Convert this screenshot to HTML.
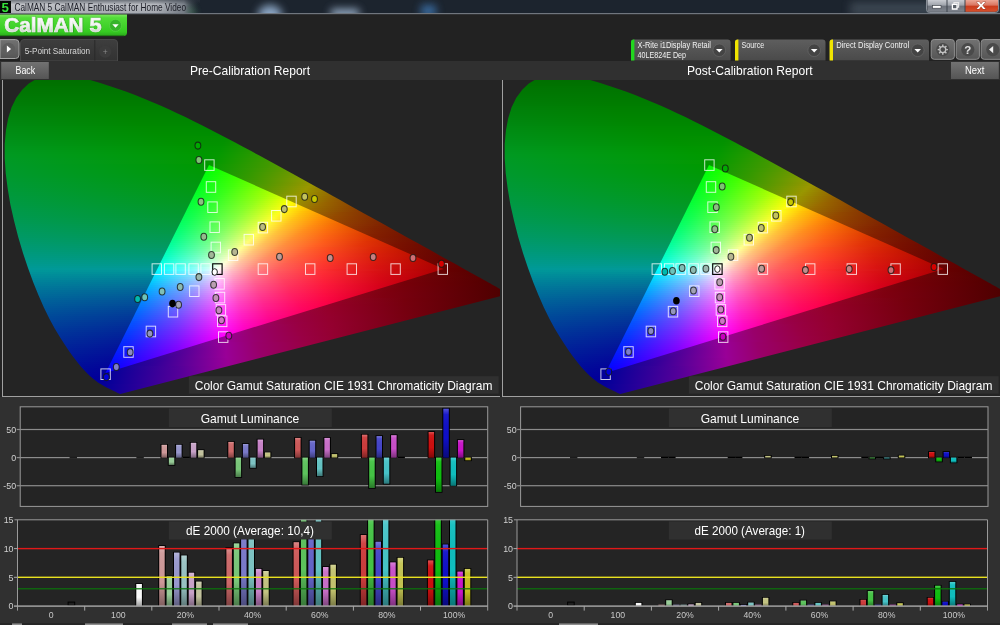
<!DOCTYPE html>
<html><head><meta charset="utf-8"><title>CalMAN 5</title>
<style>
html,body{margin:0;padding:0;background:#222}
body{width:1000px;height:625px;position:relative;overflow:hidden;font-family:"Liberation Sans",sans-serif}
.cie{position:absolute;top:80px;width:500px;height:317px;background:#242424;overflow:hidden}
.cie i{display:block;height:2px}
.hs{position:absolute;left:0;top:0;width:500px;height:317px;clip-path:polygon(120.3px 314.0px,120.1px 314.0px,119.8px 313.9px,119.5px 313.8px,119.2px 313.6px,118.9px 313.5px,118.5px 313.3px,118.1px 313.2px,117.7px 312.9px,117.2px 312.7px,116.6px 312.4px,116.1px 312.1px,115.4px 311.8px,114.7px 311.5px,114.0px 311.1px,113.2px 310.7px,112.2px 310.2px,111.2px 309.7px,110.1px 309.2px,108.9px 308.6px,107.6px 308.0px,106.2px 307.3px,104.7px 306.5px,103.1px 305.6px,101.4px 304.6px,99.6px 303.5px,97.6px 302.2px,95.5px 300.6px,93.1px 298.7px,90.5px 296.5px,87.6px 293.7px,84.5px 290.6px,81.2px 286.9px,77.6px 282.6px,73.7px 277.5px,69.5px 271.7px,65.0px 264.9px,60.0px 257.2px,54.7px 248.5px,49.4px 238.7px,44.0px 227.7px,38.6px 215.6px,33.3px 202.4px,28.0px 188.1px,22.9px 172.8px,18.2px 157.1px,14.1px 141.1px,10.4px 124.7px,7.7px 108.7px,5.7px 93.2px,4.7px 78.1px,4.7px 63.9px,5.9px 50.6px,8.2px 38.2px,11.6px 27.2px,16.3px 17.7px,22.2px 9.7px,28.8px 3.4px,36.3px -1.0px,44.6px -3.6px,53.3px -5.0px,62.2px -5.1px,71.5px -3.8px,80.8px -2.1px,90.1px 0.1px,99.5px 2.8px,108.7px 5.7px,117.7px 8.7px,126.5px 11.8px,135.1px 15.1px,143.6px 18.5px,152.0px 22.0px,160.4px 25.6px,168.8px 29.3px,177.1px 33.2px,185.4px 37.1px,193.7px 41.2px,201.9px 45.3px,210.1px 49.5px,218.3px 53.7px,226.5px 58.0px,234.7px 62.3px,243.0px 66.7px,251.2px 71.1px,259.4px 75.6px,267.6px 80.0px,275.8px 84.5px,284.0px 89.0px,292.2px 93.5px,300.3px 98.0px,308.4px 102.4px,316.5px 106.9px,324.5px 111.3px,332.4px 115.7px,340.2px 120.1px,348.0px 124.4px,355.6px 128.7px,363.2px 132.9px,370.6px 137.0px,377.9px 141.1px,385.1px 145.0px,392.1px 148.9px,398.9px 152.7px,405.5px 156.4px,411.9px 159.9px,418.0px 163.3px,423.8px 166.6px,429.3px 169.6px,434.6px 172.6px,439.7px 175.4px,444.6px 178.2px,449.3px 180.7px,453.6px 183.1px,457.6px 185.3px,461.4px 187.4px,464.9px 189.4px,468.2px 191.2px,471.3px 192.9px,474.1px 194.5px,476.7px 196.0px,479.1px 197.3px,481.4px 198.6px,483.5px 199.7px,485.4px 200.8px,487.2px 201.8px,488.9px 202.7px,490.5px 203.6px,491.9px 204.4px,493.3px 205.2px,494.7px 205.9px,495.9px 206.6px,497.0px 207.3px,498.1px 207.9px,499.1px 208.4px,500.0px 208.9px,500.9px 209.4px,501.6px 209.8px,502.3px 210.2px,502.9px 210.5px,503.5px 210.8px,504.0px 211.1px,504.5px 211.4px,505.0px 211.6px,505.4px 211.9px,505.7px 212.1px,506.0px 212.2px,506.2px 212.3px,506.5px 212.5px,506.7px 212.6px,506.9px 212.7px,507.1px 212.8px,507.3px 212.9px,507.4px 213.0px,507.6px 213.1px,507.7px 213.2px,507.9px 213.3px,508.0px 213.4px,508.2px 213.4px,508.3px 213.5px,508.5px 213.6px,508.6px 213.6px,508.7px 213.7px,508.7px 213.7px,508.8px 213.8px,508.8px 213.8px,508.9px 213.8px,508.9px 213.8px,508.9px 213.9px,508.9px 213.9px)}
.tr{position:absolute;left:0;top:85px;width:500px;clip-path:polygon(443.6px 103.9px,209.0px 0.0px,105.5px 207.9px)}
#ov{position:absolute;left:0;top:0}
.o0{margin-left:30px;width:68px;background:linear-gradient(90deg,#007000 0px,#007000 68px)}
.o1{margin-left:27px;width:78px;background:linear-gradient(90deg,#007100 0px,#007100 78px)}
.o2{margin-left:25px;width:86px;background:linear-gradient(90deg,#007200 0px,#007200 86px)}
.o3{margin-left:22px;width:95px;background:linear-gradient(90deg,#007401 0px,#007400 95px)}
.o4{margin-left:20px;width:103px;background:linear-gradient(90deg,#007502 0px,#007500 103px)}
.o5{margin-left:19px;width:109px;background:linear-gradient(90deg,#007603 0px,#007600 109px)}
.o6{margin-left:18px;width:116px;background:linear-gradient(90deg,#007703 0px,#070 116px)}
.o7{margin-left:16px;width:123px;background:linear-gradient(90deg,#007804 0px,#007800 123px)}
.o8{margin-left:15px;width:129px;background:linear-gradient(90deg,#007905 0px,#007900 105px,#007900 129px)}
.o9{margin-left:14px;width:135px;background:linear-gradient(90deg,#007a06 0px,#007a00 97px,#007a00 135px)}
.o10{margin-left:13px;width:141px;background:linear-gradient(90deg,#007b06 0px,#007b00 97px,#007b00 141px)}
.o11{margin-left:12px;width:146px;background:linear-gradient(90deg,#007c07 0px,#007c00 97px,#007c00 146px)}
.o12{margin-left:11px;width:152px;background:linear-gradient(90deg,#007d08 0px,#007d00 100px,#007d00 152px)}
.o13{margin-left:10px;width:157px;background:linear-gradient(90deg,#007f09 0px,#007f00 102px,#007f00 157px)}
.o14{margin-left:9px;width:163px;background:linear-gradient(90deg,#00800a 0px,#008000 106px,#008000 163px)}
.o15{margin-left:9px;width:167px;background:linear-gradient(90deg,#00810b 0px,#008100 109px,#008100 167px)}
.o16{margin-left:8px;width:172px;background:linear-gradient(90deg,#00820b 0px,#008200 113px,#008200 172px)}
.o17{margin-left:7px;width:177px;background:linear-gradient(90deg,#00830c 0px,#008300 117px,#008300 177px)}
.o18{margin-left:7px;width:182px;background:linear-gradient(90deg,#00840d 0px,#008400 121px,#008400 182px)}
.o19{margin-left:6px;width:187px;background:linear-gradient(90deg,#00850e 0px,#008500 125px,#008500 187px)}
.o20{margin-left:6px;width:191px;background:linear-gradient(90deg,#00860f 0px,#008600 129px,#008600 191px)}
.o21{margin-left:6px;width:195px;background:linear-gradient(90deg,#008710 0px,#008700 133px,#008700 195px)}
.o22{margin-left:5px;width:200px;background:linear-gradient(90deg,#081 0px,#080 138px,#080 200px)}
.o23{margin-left:5px;width:204px;background:linear-gradient(90deg,#008a12 0px,#008a00 142px,#008a00 204px)}
.o24{margin-left:4px;width:209px;background:linear-gradient(90deg,#008b13 0px,#008b00 147px,#008b00 209px)}
.o25{margin-left:4px;width:213px;background:linear-gradient(90deg,#008c14 0px,#008c00 151px,#008c00 213px)}
.o26{margin-left:4px;width:216px;background:linear-gradient(90deg,#008d15 0px,#008d00 155px,#008d00 216px)}
.o27{margin-left:4px;width:220px;background:linear-gradient(90deg,#008e16 0px,#008e00 159px,#008e00 220px)}
.o28{margin-left:4px;width:224px;background:linear-gradient(90deg,#008f17 0px,#008f00 163px,#038f00 222px,#048f00 224px)}
.o29{margin-left:4px;width:228px;background:linear-gradient(90deg,#009018 0px,#009000 167px,#039000 221px,#089000 228px)}
.o30{margin-left:3px;width:233px;background:linear-gradient(90deg,#00911a 0px,#009100 172px,#039100 221px,#0d9100 233px)}
.o31{margin-left:3px;width:236px;background:linear-gradient(90deg,#00921b 0px,#009200 176px,#039200 220px,#119200 236px)}
.o32{margin-left:3px;width:240px;background:linear-gradient(90deg,#00931c 0px,#009300 180px,#039300 219px,#169300 240px)}
.o33{margin-left:3px;width:244px;background:linear-gradient(90deg,#00951d 0px,#009500 184px,#039500 218px,#1b9500 244px)}
.o34{margin-left:3px;width:248px;background:linear-gradient(90deg,#00961e 0px,#009600 188px,#039600 217px,#209600 248px)}
.o35{margin-left:3px;width:251px;background:linear-gradient(90deg,#009720 0px,#009700 192px,#039700 216px,#259700 251px)}
.o36{margin-left:3px;width:255px;background:linear-gradient(90deg,#009821 0px,#009800 196px,#049800 216px,#2b9800 255px)}
.o37{margin-left:3px;width:259px;background:linear-gradient(90deg,#092 0px,#090 201px,#049900 215px,#319900 259px)}
.o38{margin-left:3px;width:262px;background:linear-gradient(90deg,#009923 0px,#090 205px,#089900 218px,#369900 262px)}
.o39{margin-left:3px;width:266px;background:linear-gradient(90deg,#009925 0px,#090 209px,#3d9900 266px)}
.o40{margin-left:3px;width:270px;background:linear-gradient(90deg,#009926 0px,#039900 211px,#439900 270px)}
.o41{margin-left:3px;width:273px;background:linear-gradient(90deg,#009927 0px,#039900 210px,#499900 273px)}
.o42{margin-left:4px;width:276px;background:linear-gradient(90deg,#009928 0px,#009901 203px,#419900 264px,#509900 276px)}
.o43{margin-left:4px;width:280px;background:linear-gradient(90deg,#009929 0px,#009902 202px,#409900 262px,#589900 280px)}
.o44{margin-left:4px;width:283px;background:linear-gradient(90deg,#00992a 0px,#009903 202px,#4b9900 269px,#5e9900 283px)}
.o45{margin-left:4px;width:287px;background:linear-gradient(90deg,#00992c 0px,#009905 201px,#349900 249px,#690 287px)}
.o46{margin-left:4px;width:291px;background:linear-gradient(90deg,#00992d 0px,#009906 200px,#2f9900 243px,#6f9900 291px)}
.o47{margin-left:4px;width:294px;background:linear-gradient(90deg,#00992e 0px,#009908 199px,#390 245px,#769900 294px)}
.o48{margin-left:5px;width:297px;background:linear-gradient(90deg,#00992f 0px,#009909 198px,#379900 246px,#7f9900 297px)}
.o49{margin-left:5px;width:301px;background:linear-gradient(90deg,#009931 0px,#00990b 197px,#3e9900 250px,#899900 301px)}
.o50{margin-left:5px;width:304px;background:linear-gradient(90deg,#009932 0px,#01990c 197px,#490 253px,#919900 304px)}
.o51{margin-left:5px;width:308px;background:linear-gradient(90deg,#009934 0px,#01990e 196px,#4d9900 258px,#999600 308px)}
.o52{margin-left:6px;width:310px;background:linear-gradient(90deg,#009935 0px,#029910 195px,#549900 260px,#999600 305px,#998e00 310px)}
.o53{margin-left:6px;width:314px;background:linear-gradient(90deg,#009936 0px,#029911 194px,#579900 260px,#999700 302px,#998400 314px)}
.o54{margin-left:6px;width:318px;background:linear-gradient(90deg,#009938 0px,#029913 193px,#589900 259px,#999700 300px,#977a00 318px)}
.o55{margin-left:6px;width:321px;background:linear-gradient(90deg,#009939 0px,#029915 192px,#579902 257px,#999700 298px,#967300 321px)}
.o56{margin-left:7px;width:324px;background:linear-gradient(90deg,#00993b 0px,#029917 190px,#579904 254px,#999600 295px,#946a00 324px)}
.o57{margin-left:7px;width:327px;background:linear-gradient(90deg,#00993c 0px,#029919 189px,#569906 252px,#8f9900 286px,#999600 293px,#946800 324px,#936400 327px)}
.o58{margin-left:7px;width:331px;background:linear-gradient(90deg,#00993e 0px,#02991b 188px,#589908 251px,#959900 287px,#998a00 298px,#936100 327px,#925c00 331px)}
.o59{margin-left:8px;width:334px;background:linear-gradient(90deg,#00993f 0px,#02991d 186px,#57990b 248px,#999700 287px,#956400 322px,#905500 334px)}
.o60{margin-left:8px;width:337px;background:linear-gradient(90deg,#009941 0px,#02991f 185px,#57990d 246px,#999700 285px,#956100 322px,#8f5000 337px)}
.o61{margin-left:8px;width:341px;background:linear-gradient(90deg,#009943 0px,#029921 184px,#589910 245px,#999602 283px,#976300 318px,#8d4a00 341px)}
.o62{margin-left:9px;width:343px;background:linear-gradient(90deg,#094 0px,#029924 182px,#579912 242px,#999604 280px,#996a00 310px,#8c4600 343px)}
.o63{margin-left:9px;width:347px;background:linear-gradient(90deg,#009946 0px,#029926 181px,#579915 240px,#999807 277px,#996c00 306px,#8a4000 347px)}
.o64{margin-left:10px;width:350px;background:linear-gradient(90deg,#009948 0px,#029928 179px,#579918 237px,#99970a 274px,#996b00 303px,#8a3e00 347px,#893c00 350px)}
.o65{margin-left:10px;width:353px;background:linear-gradient(90deg,#00994a 0px,#02992b 178px,#58991a 236px,#99970d 272px,#996a01 301px,#8a3c00 347px,#873800 353px)}
.o66{margin-left:11px;width:356px;background:linear-gradient(90deg,#00994c 0px,#02992d 176px,#57991d 233px,#999710 269px,#996a03 298px,#904700 330px,#863300 356px)}
.o67{margin-left:11px;width:359px;background:linear-gradient(90deg,#00994d 0px,#029930 175px,#579920 231px,#999613 267px,#996a05 295px,#934b00 324px,#843000 359px)}
.o68{margin-left:11px;width:363px;background:linear-gradient(90deg,#00994f 0px,#029932 174px,#569923 229px,#999616 265px,#996a08 293px,#944a00 322px,#832c00 363px)}
.o69{margin-left:12px;width:366px;background:linear-gradient(90deg,#009951 0px,#039935 172px,#589926 227px,#99981a 261px,#996b0b 288px,#944a00 319px,#812900 366px)}
.o70{margin-left:12px;width:369px;background:linear-gradient(90deg,#009953 0px,#039937 171px,#579929 225px,#99971d 259px,#996b0d 286px,#954901 318px,#802600 369px)}
.o71{margin-left:13px;width:372px;background:linear-gradient(90deg,#095 0px,#03993a 169px,#57992c 222px,#999721 256px,#996a10 283px,#954703 317px,#802500 368px,#7e2300 372px)}
.o72{margin-left:13px;width:375px;background:linear-gradient(90deg,#009958 0px,#03993d 168px,#58992f 221px,#999624 254px,#996b13 280px,#954404 317px,#802300 369px,#7d2000 375px)}
.o73{margin-left:14px;width:378px;background:linear-gradient(90deg,#00995a 0px,#039940 166px,#589933 218px,#999628 251px,#996a15 277px,#954305 315px,#822500 361px,#7b1d00 378px)}
.o74{margin-left:14px;width:382px;background:linear-gradient(90deg,#00995c 0px,#039943 165px,#579936 216px,#99982c 248px,#996c19 273px,#954106 315px,#822300 361px,#7a1b00 382px)}
.o75{margin-left:15px;width:384px;background:linear-gradient(90deg,#00995e 0px,#039946 163px,#57993a 213px,#999730 245px,#996b1b 270px,#953f08 314px,#822100 362px,#791900 384px)}
.o76{margin-left:15px;width:388px;background:linear-gradient(90deg,#009961 0px,#039949 162px,#58993e 212px,#999734 243px,#996a1e 268px,#97410a 309px,#822000 362px,#771600 388px)}
.o77{margin-left:16px;width:390px;background:linear-gradient(90deg,#009963 0px,#03994d 160px,#579941 209px,#999738 240px,#996a21 265px,#99430e 303px,#842100 355px,#761400 390px)}
.o78{margin-left:16px;width:394px;background:linear-gradient(90deg,#009965 0px,#039950 159px,#579945 207px,#99963c 238px,#996a25 262px,#994410 299px,#842000 354px,#741200 394px)}
.o79{margin-left:17px;width:397px;background:linear-gradient(90deg,#009968 0px,#039953 157px,#589949 205px,#999841 234px,#996b28 258px,#994513 294px,#892504 341px,#721000 397px)}
.o80{margin-left:18px;width:399px;background:linear-gradient(90deg,#00996a 0px,#039957 155px,#58994d 202px,#999845 231px,#996c2c 254px,#994416 290px,#922e0a 320px,#791400 380px,#710f00 399px)}
.o81{margin-left:18px;width:403px;background:linear-gradient(90deg,#00996d 0px,#03995b 154px,#579952 200px,#99974a 229px,#996b2f 252px,#994418 287px,#932f0c 316px,#791200 381px,#700d00 403px)}
.o82{margin-left:19px;width:405px;background:linear-gradient(90deg,#009970 0px,#03995f 152px,#579956 197px,#99974e 226px,#996a32 249px,#99441b 284px,#942f0e 313px,#7a1200 377px,#6e0b00 405px)}
.o83{margin-left:19px;width:409px;background:linear-gradient(90deg,#009973 0px,#039962 151px,#58995a 196px,#999653 224px,#996b37 246px,#99441e 280px,#942d0f 312px,#7a1100 377px,#6d0a00 409px)}
.o84{margin-left:20px;width:411px;background:linear-gradient(90deg,#009975 0px,#039967 149px,#58995f 193px,#999657 221px,#996a3a 243px,#994320 277px,#952c11 310px,#7a1000 376px,#6b0900 411px)}
.o85{margin-left:21px;width:414px;background:linear-gradient(90deg,#009978 0px,#01996b 146px,#559964 189px,#99985e 217px,#996c40 238px,#994524 271px,#952b12 308px,#7a0f01 374px,#6a0700 414px)}
.o86{margin-left:21px;width:418px;background:linear-gradient(90deg,#00997c 0px,#01996f 145px,#579969 188px,#999863 215px,#996b43 236px,#994527 268px,#952913 308px,#790e01 376px,#680600 418px)}
.o87{margin-left:22px;width:420px;background:linear-gradient(90deg,#00997f 0px,#019974 143px,#56996e 185px,#999769 212px,#996b47 233px,#99442a 265px,#952714 307px,#790d02 376px,#670500 420px)}
.o88{margin-left:22px;width:424px;background:linear-gradient(90deg,#009982 0px,#019978 142px,#559974 183px,#99976e 210px,#996a4b 231px,#99432c 263px,#952515 307px,#790c02 377px,#650400 424px)}
.o89{margin-left:23px;width:426px;background:linear-gradient(90deg,#009985 0px,#01997d 140px,#579979 181px,#999674 207px,#996a50 227px,#994430 258px,#962417 305px,#790b03 376px,#640300 426px)}
.o90{margin-left:24px;width:429px;background:linear-gradient(90deg,#009989 0px,#019982 138px,#56997f 178px,#99987c 203px,#996b55 223px,#994535 253px,#962217 304px,#780903 376px,#620200 429px)}
.o91{margin-left:24px;width:433px;background:linear-gradient(90deg,#00998c 0px,#019987 137px,#569985 176px,#999882 201px,#996c5b 220px,#994639 249px,#98231b 299px,#7b0a05 369px,#610100 433px)}
.o92{margin-left:25px;width:435px;background:linear-gradient(90deg,#009990 0px,#01998c 135px,#55998b 173px,#999788 198px,#996b5f 217px,#99453c 246px,#99241e 294px,#7d0a07 364px,#600000 435px)}
.o93{margin-left:26px;width:438px;background:linear-gradient(90deg,#009994 0px,#029992 133px,#579991 171px,#99978e 195px,#996a64 214px,#99443f 243px,#992320 291px,#7d0907 362px,#5e0000 438px)}
.o94{margin-left:27px;width:441px;background:linear-gradient(90deg,#009998 0px,#029998 131px,#569998 168px,#999695 192px,#996b6a 210px,#944 238px,#992423 284px,#891010 331px,#630000 425px,#5c0000 441px)}
.o95{margin-left:27px;width:444px;background:linear-gradient(90deg,#009699 0px,#029499 130px,#559499 167px,#999399 191px,#99686d 209px,#994246 237px,#992225 283px,#8e1214 320px,#680001 413px,#5b0000 444px)}
.o96{margin-left:28px;width:447px;background:linear-gradient(90deg,#009299 0px,#018f99 128px,#568d99 166px,#998996 191px,#99606a 210px,#993c44 239px,#991e23 287px,#7d0609 360px,#5b0000 443px,#590000 447px)}
.o97{margin-left:29px;width:449px;background:linear-gradient(90deg,#008e99 0px,#018999 126px,#568799 165px,#998397 190px,#995c6b 209px,#993944 239px,#991b23 288px,#7c0509 361px,#580000 449px)}
.o98{margin-left:29px;width:453px;background:linear-gradient(90deg,#008b99 0px,#018499 125px,#578199 165px,#997d97 190px,#99566a 210px,#993544 240px,#991923 290px,#7c040a 362px,#570000 453px)}
.o99{margin-left:30px;width:456px;background:linear-gradient(90deg,#008799 0px,#017f99 123px,#557b99 163px,#997798 189px,#99526b 209px,#993244 240px,#981623 292px,#7a020a 365px,#500 456px)}
.o100{margin-left:31px;width:458px;background:linear-gradient(90deg,#008399 0px,#017a99 121px,#567699 162px,#997198 188px,#994e6c 208px,#992f45 239px,#981424 291px,#7a010a 364px,#540000 458px)}
.o101{margin-left:32px;width:461px;background:linear-gradient(90deg,#007f99 0px,#017699 119px,#567099 161px,#996a96 188px,#99486a 209px,#992a44 241px,#961021 296px,#760009 373px,#520000 461px)}
.o102{margin-left:32px;width:464px;background:linear-gradient(90deg,#007c99 0px,#037199 119px,#576b99 161px,#996497 188px,#99446b 209px,#992744 242px,#960e22 296px,#770009 372px,#510000 464px)}
.o103{margin-left:33px;width:467px;background:linear-gradient(90deg,#007899 0px,#036d99 117px,#586699 160px,#995f97 187px,#99406c 208px,#992445 241px,#960d23 295px,#78000b 367px,#4f0000 467px)}
.o104{margin-left:34px;width:466px;background:linear-gradient(90deg,#007599 0px,#036899 115px,#586199 159px,#995a97 186px,#993c6b 208px,#992144 242px,#960b24 294px,#7a000c 362px,#4f0000 466px)}
.o105{margin-left:35px;width:465px;background:linear-gradient(90deg,#007199 0px,#036499 113px,#575c99 157px,#995598 185px,#99386c 207px,#991f45 241px,#960a24 293px,#7c000e 356px,#4f0000 465px)}
.o106{margin-left:36px;width:464px;background:linear-gradient(90deg,#006e99 0px,#036099 111px,#575899 156px,#994f96 185px,#993369 208px,#991b43 243px,#960825 292px,#7e0010 350px,#4f0000 464px)}
.o107{margin-left:36px;width:464px;background:linear-gradient(90deg,#006b99 0px,#035c99 110px,#585399 156px,#994a96 185px,#99306a 208px,#991944 243px,#960726 292px,#7f0011 347px,#4f0000 464px)}
.o108{margin-left:37px;width:463px;background:linear-gradient(90deg,#006899 0px,#035899 108px,#584f99 155px,#994697 184px,#992d6b 207px,#991644 243px,#960527 291px,#7f0011 347px,#4f0000 463px)}
.o109{margin-left:38px;width:456px;background:linear-gradient(90deg,#006499 0px,#035599 106px,#574b99 153px,#994297 183px,#99296a 207px,#991343 244px,#950427 291px,#76000d 367px,#520001 456px)}
.o110{margin-left:39px;width:448px;background:linear-gradient(90deg,#006199 0px,#035199 104px,#574799 152px,#993d98 182px,#99266b 206px,#914 243px,#950228 290px,#76000d 366px,#540002 448px)}
.o111{margin-left:40px;width:439px;background:linear-gradient(90deg,#005e99 0px,#034e99 102px,#584399 151px,#993998 181px,#99236c 205px,#990f45 242px,#950129 289px,#76000e 365px,#580003 439px)}
.o112{margin-left:41px;width:430px;background:linear-gradient(90deg,#005b99 0px,#034b99 100px,#583f99 150px,#993496 181px,#991e6a 206px,#990c43 244px,#950029 288px,#76000e 364px,#5b0004 430px)}
.o113{margin-left:42px;width:421px;background:linear-gradient(90deg,#005899 0px,#024799 98px,#573b99 148px,#993097 180px,#991c6a 205px,#990944 244px,#95002a 287px,#76000f 363px,#5e0005 421px)}
.o114{margin-left:43px;width:413px;background:linear-gradient(90deg,#059 0px,#024499 96px,#573799 147px,#992d97 179px,#99196b 204px,#990844 243px,#95002b 286px,#76000f 362px,#610006 413px)}
.o115{margin-left:44px;width:404px;background:linear-gradient(90deg,#005299 0px,#024199 94px,#583499 146px,#992997 178px,#99166b 204px,#990544 244px,#95002b 285px,#760010 361px,#640008 404px)}
.o116{margin-left:45px;width:395px;background:linear-gradient(90deg,#004f99 0px,#023e99 92px,#573199 144px,#992598 177px,#99136b 203px,#990344 243px,#95002c 284px,#770010 359px,#680009 395px)}
.o117{margin-left:46px;width:386px;background:linear-gradient(90deg,#004c99 0px,#023b99 90px,#572d99 143px,#992196 177px,#991069 204px,#990143 245px,#95002d 283px,#701 358px,#6b000b 386px)}
.o118{margin-left:47px;width:378px;background:linear-gradient(90deg,#004999 0px,#023899 88px,#582a99 142px,#991e96 176px,#990d6a 203px,#990043 245px,#95002e 282px,#701 357px,#6e000d 378px)}
.o119{margin-left:48px;width:369px;background:linear-gradient(90deg,#004799 0px,#023699 86px,#582799 141px,#991a97 175px,#990b6b 202px,#904 244px,#95002e 281px,#770012 356px,#71000f 369px)}
.o120{margin-left:49px;width:360px;background:linear-gradient(90deg,#049 0px,#023399 84px,#572499 139px,#991797 174px,#99086a 202px,#990047 239px,#95002f 280px,#770012 355px,#740011 360px)}
.o121{margin-left:50px;width:351px;background:linear-gradient(90deg,#004199 0px,#023099 82px,#572199 138px,#991498 173px,#99066b 201px,#99004a 236px,#950030 279px,#780014 351px)}
.o122{margin-left:51px;width:343px;background:linear-gradient(90deg,#003f99 0px,#022e99 80px,#581e99 137px,#991096 173px,#990369 202px,#990043 246px,#950030 279px,#7b0016 343px)}
.o123{margin-left:52px;width:334px;background:linear-gradient(90deg,#003c99 0px,#022b99 78px,#561b99 135px,#990d96 172px,#99016a 201px,#990043 246px,#950030 278px,#7e0019 334px)}
.o124{margin-left:53px;width:325px;background:linear-gradient(90deg,#003999 0px,#022999 76px,#571899 134px,#990a97 171px,#99006a 200px,#904 245px,#950031 277px,#81001c 325px)}
.o125{margin-left:54px;width:316px;background:linear-gradient(90deg,#003799 0px,#022799 74px,#571599 133px,#990897 170px,#99006b 199px,#904 244px,#950032 276px,#84001f 316px)}
.o126{margin-left:55px;width:307px;background:linear-gradient(90deg,#003499 0px,#022499 72px,#581399 132px,#990597 169px,#99006a 199px,#904 245px,#940032 276px,#880023 307px)}
.o127{margin-left:57px;width:298px;background:linear-gradient(90deg,#003299 0px,#022299 69px,#571099 129px,#990298 167px,#99006b 197px,#904 243px,#940032 274px,#8b0026 298px)}
.o128{margin-left:58px;width:289px;background:linear-gradient(90deg,#002f99 0px,#022099 67px,#570e99 128px,#990096 167px,#990069 198px,#990043 246px,#940032 275px,#8e002b 289px)}
.o129{margin-left:59px;width:280px;background:linear-gradient(90deg,#002d99 0px,#031d99 66px,#590b99 128px,#990096 166px,#99006a 197px,#990043 245px,#940032 274px,#91002f 280px)}
.o130{margin-left:60px;width:271px;background:linear-gradient(90deg,#002a99 0px,#031b99 64px,#580999 126px,#960099 162px,#990080 179px,#990057 217px,#960036 268px,#940034 271px)}
.o131{margin-left:62px;width:262px;background:linear-gradient(90deg,#002899 0px,#031999 61px,#580699 124px,#900099 157px,#990095 164px,#990069 196px,#990043 245px,#970039 262px)}
.o132{margin-left:63px;width:253px;background:linear-gradient(90deg,#002599 0px,#031799 59px,#590499 123px,#990097 162px,#99006b 194px,#904 243px,#99003e 253px)}
.o133{margin-left:64px;width:244px;background:linear-gradient(90deg,#002399 0px,#031599 57px,#580299 121px,#990096 162px,#990069 195px,#990043 244px)}
.o134{margin-left:66px;width:234px;background:linear-gradient(90deg,#002099 0px,#031399 54px,#580099 119px,#990096 160px,#99006a 193px,#990049 234px)}
.o135{margin-left:67px;width:226px;background:linear-gradient(90deg,#001e99 0px,#031199 52px,#580099 118px,#990097 159px,#99006a 192px,#99004e 226px)}
.o136{margin-left:68px;width:217px;background:linear-gradient(90deg,#001c99 0px,#031099 50px,#540099 114px,#990097 158px,#99006b 191px,#990054 217px)}
.o137{margin-left:70px;width:207px;background:linear-gradient(90deg,#001999 0px,#030e99 47px,#4c0099 106px,#990097 156px,#99006a 190px,#99005b 207px)}
.o138{margin-left:71px;width:198px;background:linear-gradient(90deg,#001799 0px,#030c99 45px,#409 99px,#990098 155px,#99006b 189px,#990062 198px)}
.o139{margin-left:73px;width:189px;background:linear-gradient(90deg,#001599 0px,#030a99 42px,#3e0099 92px,#990096 154px,#990069 189px)}
.o140{margin-left:74px;width:180px;background:linear-gradient(90deg,#001399 0px,#030999 40px,#380099 86px,#910099 147px,#990093 155px,#990072 180px)}
.o141{margin-left:76px;width:170px;background:linear-gradient(90deg,#001099 0px,#030799 37px,#340099 80px,#8c0099 142px,#990095 152px,#99007c 170px)}
.o142{margin-left:77px;width:161px;background:linear-gradient(90deg,#000e99 0px,#030599 35px,#340099 78px,#8c0099 141px,#990095 151px,#990087 161px)}
.o143{margin-left:79px;width:152px;background:linear-gradient(90deg,#000c99 0px,#030499 32px,#4f0099 97px,#990097 148px,#990091 152px)}
.o144{margin-left:81px;width:142px;background:linear-gradient(90deg,#000a99 0px,#030299 29px,#570099 101px,#940099 142px)}
.o145{margin-left:83px;width:132px;background:linear-gradient(90deg,#000799 0px,#030199 26px,#580099 99px,#870099 132px)}
.o146{margin-left:84px;width:123px;background:linear-gradient(90deg,#000599 0px,#040099 25px,#590099 99px,#7b0099 123px)}
.o147{margin-left:86px;width:114px;background:linear-gradient(90deg,#000399 0px,#040099 22px,#580099 96px,#710099 114px)}
.o148{margin-left:88px;width:104px;background:linear-gradient(90deg,#000199 0px,#030099 19px,#590099 94px,#609 104px)}
.o149{margin-left:91px;width:93px;background:linear-gradient(90deg,#009 0px,#030099 15px,#590099 91px,#5c0099 93px)}
.o150{margin-left:93px;width:83px;background:linear-gradient(90deg,#009 0px,#040099 13px,#520099 83px)}
.o151{margin-left:96px;width:72px;background:linear-gradient(90deg,#009 0px,#0b0099 16px,#480099 72px)}
.o152{margin-left:99px;width:62px;background:linear-gradient(90deg,#009 0px,#410099 62px)}
.o153{margin-left:102px;width:51px;background:linear-gradient(90deg,#030099 0px,#380099 51px)}
.o154{margin-left:106px;width:39px;background:linear-gradient(90deg,#080099 0px,#300099 39px)}
.o155{margin-left:110px;width:27px;background:linear-gradient(90deg,#0d0099 0px,#280099 27px)}
.o156{margin-left:114px;width:16px;background:linear-gradient(90deg,#109 0px,#210099 16px)}
.o157{margin-left:119px;width:3px;background:linear-gradient(90deg,#170099 0px,#1a0099 3px)}
.n0{margin-left:207px;width:8px;background:linear-gradient(90deg,#00ff02 0px,#0bff00 8px)}
.n1{margin-left:206px;width:14px;background:linear-gradient(90deg,#00ff04 0px,#15ff00 14px)}
.n2{margin-left:205px;width:19px;background:linear-gradient(90deg,#00ff07 0px,#1eff00 19px)}
.n3{margin-left:204px;width:25px;background:linear-gradient(90deg,#00ff09 0px,#2aff00 25px)}
.n4{margin-left:203px;width:30px;background:linear-gradient(90deg,#00ff0c 0px,#34ff00 30px)}
.n5{margin-left:202px;width:36px;background:linear-gradient(90deg,#00ff0f 0px,#40ff00 36px)}
.n6{margin-left:201px;width:41px;background:linear-gradient(90deg,#00ff12 0px,#45ff00 38px,#4bff00 41px)}
.n7{margin-left:200px;width:47px;background:linear-gradient(90deg,#00ff14 0px,#43ff03 37px,#58ff00 47px)}
.n8{margin-left:199px;width:52px;background:linear-gradient(90deg,#00ff17 0px,#42ff06 36px,#64ff00 52px)}
.n9{margin-left:198px;width:58px;background:linear-gradient(90deg,#00ff1a 0px,#41ff0a 35px,#73ff00 58px)}
.n10{margin-left:197px;width:63px;background:linear-gradient(90deg,#00ff1d 0px,#3fff0d 34px,#80ff00 63px)}
.n11{margin-left:196px;width:69px;background:linear-gradient(90deg,#00ff20 0px,#3eff11 33px,#90ff00 69px)}
.n12{margin-left:195px;width:74px;background:linear-gradient(90deg,#00ff23 0px,#3dff15 32px,#9eff00 74px)}
.n13{margin-left:194px;width:80px;background:linear-gradient(90deg,#00ff26 0px,#3bff18 31px,#abff00 78px,#b0ff00 80px)}
.n14{margin-left:193px;width:85px;background:linear-gradient(90deg,#00ff2a 0px,#38ff1c 29px,#a8ff03 76px,#c0ff00 85px)}
.n15{margin-left:192px;width:91px;background:linear-gradient(90deg,#00ff2d 0px,#32ff21 26px,#9fff09 72px,#d4ff00 91px)}
.n16{margin-left:191px;width:96px;background:linear-gradient(90deg,#00ff30 0px,#2cff26 23px,#99ff0e 69px,#e6ff00 96px)}
.n17{margin-left:190px;width:102px;background:linear-gradient(90deg,#00ff34 0px,#28ff2b 21px,#96ff13 67px,#fcff00 102px)}
.n18{margin-left:189px;width:107px;background:linear-gradient(90deg,#00ff37 0px,#24ff2f 19px,#93ff18 65px,#fffe01 102px,#ffef00 107px)}
.n19{margin-left:188px;width:113px;background:linear-gradient(90deg,#00ff3b 0px,#2f3 18px,#8fff1d 63px,#fffe06 101px,#ffdb00 113px)}
.n20{margin-left:187px;width:118px;background:linear-gradient(90deg,#00ff3f 0px,#1fff38 16px,#8cff22 61px,#fffd0a 100px,#ffcb00 118px)}
.n21{margin-left:186px;width:124px;background:linear-gradient(90deg,#00ff43 0px,#1dff3c 15px,#8bff26 60px,#fffd0f 99px,#ffc400 120px,#fb0 124px)}
.n22{margin-left:185px;width:129px;background:linear-gradient(90deg,#00ff46 0px,#1bff41 14px,#88ff2c 58px,#fbff15 96px,#ffe60e 105px,#ffae00 129px)}
.n23{margin-left:184px;width:135px;background:linear-gradient(90deg,#00ff4a 0px,#19ff45 13px,#87ff30 57px,#f8ff1b 94px,#fffb18 97px,#ffc208 118px,#ffa000 135px)}
.n24{margin-left:183px;width:140px;background:linear-gradient(90deg,#00ff4f 0px,#17ff4a 12px,#83ff36 55px,#f5ff20 92px,#fffb1d 96px,#ffc10c 117px,#fd9400 140px)}
.n25{margin-left:182px;width:146px;background:linear-gradient(90deg,#00ff53 0px,#15ff4e 11px,#82ff3b 54px,#f6ff26 91px,#fffa22 95px,#ffc010 116px,#fc8c00 143px,#fa8600 146px)}
.n26{margin-left:181px;width:151px;background:linear-gradient(90deg,#00ff57 0px,#13ff53 10px,#81ff40 53px,#f3ff2c 89px,#fffd29 93px,#ffc315 113px,#fc8802 144px,#f77c00 151px)}
.n27{margin-left:180px;width:157px;background:linear-gradient(90deg,#00ff5b 0px,#13ff58 10px,#80ff45 52px,#f3ff31 88px,#fffc2e 92px,#ffc219 112px,#ff8e07 139px,#f37100 157px)}
.n28{margin-left:179px;width:162px;background:linear-gradient(90deg,#00ff60 0px,#11ff5d 9px,#7fff4a 51px,#f0ff37 86px,#fffc34 91px,#ffc11e 111px,#ff8d0a 138px,#f16800 162px)}
.n29{margin-left:178px;width:168px;background:linear-gradient(90deg,#00ff65 0px,#11ff61 9px,#7eff50 50px,#f1ff3d 85px,#fffb39 90px,#ffc223 109px,#ff8e0e 136px,#f46b03 158px,#ed5e00 168px)}
.n30{margin-left:177px;width:173px;background:linear-gradient(90deg,#00ff69 0px,#0fff67 8px,#7dff55 49px,#f1ff43 84px,#fffa3f 89px,#ffc128 108px,#ff8c12 135px,#f97208 152px,#ea5600 173px)}
.n31{margin-left:176px;width:179px;background:linear-gradient(90deg,#00ff6e 0px,#0fff6c 8px,#7cff5b 48px,#eeff4a 82px,#fffd47 87px,#ffc32d 106px,#ff8e17 132px,#fb730b 150px,#e74e00 179px)}
.n32{margin-left:175px;width:184px;background:linear-gradient(90deg,#00ff73 0px,#0dff71 7px,#7bff61 47px,#eeff50 81px,#fffd4d 86px,#ffc433 104px,#ff901c 129px,#fb6f0d 151px,#e44800 184px)}
.n33{margin-left:174px;width:190px;background:linear-gradient(90deg,#00ff79 0px,#0dff76 7px,#7aff67 46px,#ebff57 79px,#fffc53 85px,#ffc338 103px,#ff8f1f 128px,#fc6d10 151px,#e14100 190px)}
.n34{margin-left:173px;width:195px;background:linear-gradient(90deg,#00ff7e 0px,#0dff7c 7px,#79ff6d 45px,#ebff5e 78px,#ffff5b 83px,#ffc53e 101px,#ff8f24 126px,#fc6912 152px,#e13e00 191px,#de3b00 195px)}
.n35{margin-left:172px;width:201px;background:linear-gradient(90deg,#00ff84 0px,#0bff82 6px,#77ff74 44px,#e8ff65 76px,#ffff62 82px,#ffc344 100px,#ff9029 124px,#fc6514 153px,#e03b01 193px,#db3500 201px)}
.n36{margin-left:171px;width:207px;background:linear-gradient(90deg,#00ff89 0px,#0bff87 6px,#76ff7a 43px,#e8ff6c 75px,#fffe69 81px,#ffc54a 98px,#ff902e 122px,#fc6216 154px,#e03802 195px,#d72f00 207px)}
.n37{margin-left:170px;width:212px;background:linear-gradient(90deg,#00ff8f 0px,#0bff8d 6px,#78ff81 43px,#e8ff73 74px,#fffd70 80px,#ffc450 97px,#ff8f32 121px,#fc5e17 155px,#df3503 197px,#d52b00 212px)}
.n38{margin-left:169px;width:218px;background:linear-gradient(90deg,#00ff95 0px,#0bff93 6px,#7f8 42px,#e9ff7b 73px,#fffd77 79px,#ffc355 96px,#ff8f37 119px,#fc5b19 156px,#df3205 198px,#d12600 218px)}
.n39{margin-left:168px;width:223px;background:linear-gradient(90deg,#00ff9b 0px,#09ff9a 5px,#75ff8f 41px,#e9ff83 72px,#fffc7e 78px,#ffc15b 95px,#ff8e3b 118px,#ff5f1f 151px,#e33508 193px,#ce2200 223px)}
.n40{margin-left:167px;width:229px;background:linear-gradient(90deg,#00ffa2 0px,#09ffa0 5px,#74ff96 40px,#e5ff8b 70px,#ffff89 76px,#ffc363 93px,#ff8e41 116px,#ff5f23 149px,#e4330a 193px,#cb1e00 229px)}
.n41{margin-left:166px;width:234px;background:linear-gradient(90deg,#00ffa8 0px,#09ffa7 5px,#76ff9d 40px,#eaff93 70px,#ffff91 75px,#ffc56b 91px,#ff9048 113px,#ff6229 144px,#fa4e1d 161px,#db2807 207px,#c81a00 234px)}
.n42{margin-left:165px;width:240px;background:linear-gradient(90deg,#00ffaf 0px,#09ffae 5px,#75ffa5 39px,#e6ff9c 68px,#fffe99 74px,#ffc371 90px,#ff8f4d 112px,#ff602d 143px,#fb4c20 161px,#db2708 207px,#c51600 240px)}
.n43{margin-left:164px;width:245px;background:linear-gradient(90deg,#00ffb6 0px,#09ffb5 5px,#77ffad 39px,#eaffa4 68px,#fffda1 73px,#ffc277 89px,#ff8d51 111px,#ff5f30 142px,#fb4921 162px,#db2409 209px,#c21300 245px)}
.n44{margin-left:163px;width:251px;background:linear-gradient(90deg,#00ffbd 0px,#0affbc 5px,#76ffb5 38px,#e6ffae 66px,#fffcaa 72px,#ffc480 87px,#ff8f59 108px,#ff6137 138px,#fc4724 162px,#db220b 209px,#bf1000 251px)}
.n45{margin-left:162px;width:256px;background:linear-gradient(90deg,#00ffc5 0px,#07ffc4 4px,#74ffbe 37px,#e7ffb7 65px,#fffbb3 71px,#ffc287 86px,#ff8e5e 107px,#ff5f3a 137px,#fc4425 163px,#db200c 211px,#bc0e00 256px)}
.n46{margin-left:161px;width:262px;background:linear-gradient(90deg,#00ffcd 0px,#07ffcc 4px,#73ffc7 36px,#e3ffc1 63px,#ffffbf 69px,#ffc490 84px,#ff9067 104px,#ff6141 133px,#fc4127 164px,#da1d0c 213px,#b90b00 262px)}
.n47{margin-left:160px;width:267px;background:linear-gradient(90deg,#00ffd5 0px,#07ffd4 4px,#71ffd0 35px,#e3ffcb 62px,#fffec9 68px,#ffc69a 82px,#ff916e 102px,#ff6247 130px,#fc3e29 165px,#d91b0d 215px,#b60800 267px)}
.n48{margin-left:159px;width:273px;background:linear-gradient(90deg,#0fd 0px,#07ffdd 4px,#73ffd9 35px,#e3ffd5 61px,#fffed3 67px,#ffc5a2 81px,#ff8f74 101px,#ff614b 129px,#fc3a2a 166px,#d9190e 217px,#b20600 273px)}
.n49{margin-left:158px;width:278px;background:linear-gradient(90deg,#00ffe6 0px,#07ffe5 4px,#72ffe3 34px,#e3ffe0 60px,#fffddd 66px,#ffc3aa 80px,#ff907b 99px,#ff6152 126px,#fc382d 166px,#d9170f 218px,#b00400 278px)}
.n50{margin-left:157px;width:284px;background:linear-gradient(90deg,#00ffef 0px,#07ffef 4px,#74ffed 34px,#e4ffeb 59px,#fffce8 65px,#ffc2b2 79px,#ff8e81 98px,#ff6056 125px,#fc352e 167px,#d81410 220px,#ac0200 284px)}
.n51{margin-left:156px;width:289px;background:linear-gradient(90deg,#00fff8 0px,#07fff8 4px,#72fff7 33px,#e4fff7 58px,#fefff7 63px,#ffc0ba 78px,#ff8c87 97px,#ff5e5a 124px,#fd3331 167px,#d91311 220px,#a90000 289px)}
.n52{margin-left:155px;width:290px;background:linear-gradient(90deg,#00fcff 0px,#08fcff 4px,#73fcff 33px,#e6fbff 58px,#fffafe 63px,#ffc2c6 76px,#ff8f92 94px,#ff6063 120px,#ff3739 159px,#f42628 181px,#ca0a0b 242px,#a90000 290px)}
.n53{margin-left:154px;width:284px;background:linear-gradient(90deg,#00f3ff 0px,#07f3ff 4px,#75f1ff 34px,#e6efff 59px,#ffefff 64px,#ffb6c4 78px,#ff848f 97px,#ff5860 124px,#ff3037 165px,#db1115 218px,#ae0002 284px)}
.n54{margin-left:153px;width:279px;background:linear-gradient(90deg,#00eaff 0px,#07e9ff 4px,#73e7ff 34px,#e5e4ff 60px,#fee3ff 65px,#ffabc2 80px,#ff7c8f 99px,#ff515f 127px,#fc2a34 171px,#d70d14 225px,#b20004 279px)}
.n55{margin-left:152px;width:273px;background:linear-gradient(90deg,#00e1ff 0px,#07e0ff 4px,#74ddff 35px,#e5d9ff 61px,#ffd5fc 67px,#ffa3c3 81px,#ff748e 101px,#ff4c60 129px,#fc2736 172px,#d70b15 226px,#b70006 273px)}
.n56{margin-left:151px;width:268px;background:linear-gradient(90deg,#00d8ff 0px,#07d8ff 4px,#72d3ff 35px,#e5ceff 62px,#ffcbfd 68px,#ff9cc5 82px,#ff6f90 102px,#ff4861 130px,#fc2437 173px,#d70916 227px,#bb0008 268px)}
.n57{margin-left:150px;width:262px;background:linear-gradient(90deg,#00d0ff 0px,#07d0ff 4px,#73caff 36px,#e4c4ff 63px,#ffc1fd 69px,#ff92c3 84px,#ff688f 104px,#ff4161 133px,#fc2139 174px,#d70817 228px,#c0000b 262px)}
.n58{margin-left:149px;width:257px;background:linear-gradient(90deg,#00c8ff 0px,#07c8ff 4px,#75c1ff 37px,#e8baff 65px,#ffb8fe 70px,#ff8ac4 85px,#ff618f 106px,#ff3c60 136px,#fc1e39 176px,#d70618 230px,#c4000e 257px)}
.n59{margin-left:148px;width:251px;background:linear-gradient(90deg,#00c1ff 0px,#07c0ff 4px,#73b8ff 37px,#e4b1ff 65px,#ffafff 71px,#ff83c5 86px,#ff5b90 107px,#ff3861 137px,#fc1b3b 177px,#d70419 231px,#c90011 251px)}
.n60{margin-left:147px;width:246px;background:linear-gradient(90deg,#00b9ff 0px,#06b8ff 4px,#74b0ff 38px,#e8a7ff 67px,#fea6ff 72px,#ff78c1 89px,#ff528c 111px,#ff315e 142px,#fc183c 178px,#d7021a 232px,#cd0014 246px)}
.n61{margin-left:146px;width:240px;background:linear-gradient(90deg,#00b2ff 0px,#06b1ff 4px,#72a8ff 38px,#e39fff 67px,#ff9afc 74px,#ff72c2 90px,#ff4d8e 112px,#ff2d60 143px,#fc163d 179px,#d7011b 233px,#d20018 240px)}
.n62{margin-left:145px;width:235px;background:linear-gradient(90deg,#00abff 0px,#09aaff 5px,#77a0ff 40px,#eb95ff 70px,#ff92fd 75px,#ff6cc3 91px,#ff498f 113px,#ff2960 145px,#fc133f 180px,#d7001c 234px,#d6001b 235px)}
.n63{margin-left:144px;width:229px;background:linear-gradient(90deg,#00a4ff 0px,#09a3ff 5px,#7599ff 40px,#e78dff 70px,#ff8afe 76px,#ff65c5 92px,#ff4491 114px,#ff2661 146px,#fc1140 181px,#db0020 229px)}
.n64{margin-left:143px;width:224px;background:linear-gradient(90deg,#009eff 0px,#099dff 5px,#7691ff 41px,#e685ff 71px,#ff82fe 77px,#ff5fc6 93px,#ff3f92 115px,#ff2263 147px,#fc0e41 182px,#df0024 224px)}
.n65{margin-left:142px;width:218px;background:linear-gradient(90deg,#0098ff 0px,#0996ff 5px,#748aff 41px,#e67dff 72px,#ff7bff 78px,#ff58c4 95px,#ff3990 118px,#ff1d61 151px,#fc0c43 183px,#e40029 218px)}
.n66{margin-left:141px;width:213px;background:linear-gradient(90deg,#0091ff 0px,#0890ff 5px,#7583ff 42px,#e676ff 73px,#ff71fc 80px,#ff50c3 97px,#ff328e 121px,#ff185f 155px,#fc0944 184px,#e8002e 213px)}
.n67{margin-left:140px;width:207px;background:linear-gradient(90deg,#008cff 0px,#088aff 5px,#777cff 43px,#e96eff 75px,#ff6afc 81px,#ff4bc4 98px,#ff2e8f 122px,#ff1560 156px,#fc0745 185px,#ed0033 207px)}
.n68{margin-left:139px;width:202px;background:linear-gradient(90deg,#0086ff 0px,#0884ff 5px,#7576ff 43px,#e567ff 75px,#ff63fd 82px,#ff44c2 100px,#ff298f 124px,#ff1160 159px,#fc0447 186px,#f10039 202px)}
.n69{margin-left:138px;width:196px;background:linear-gradient(90deg,#0080ff 0px,#087eff 5px,#7670ff 44px,#e960ff 77px,#ff5cfe 83px,#ff3fc3 101px,#ff248e 126px,#ff0d60 161px,#fc0248 187px,#f50040 196px)}
.n70{margin-left:137px;width:191px;background:linear-gradient(90deg,#007bff 0px,#0a79ff 6px,#7769ff 45px,#e859ff 78px,#ff56fe 84px,#ff3ac4 102px,#ff2190 127px,#ff0a60 163px,#fc0049 188px,#fa0046 191px)}
.n71{margin-left:136px;width:185px;background:linear-gradient(90deg,#0075ff 0px,#0a73ff 6px,#7863ff 46px,#ec52ff 80px,#ff4fff 85px,#ff35c6 103px,#ff1d91 128px,#ff0762 164px,#fe004e 185px)}
.n72{margin-left:135px;width:180px;background:linear-gradient(90deg,#0070ff 0px,#0a6eff 6px,#765eff 46px,#e84cff 80px,#ff47fc 87px,#ff2ec2 106px,#ff178d 132px,#ff035f 169px,#f05 180px)}
.n73{margin-left:134px;width:174px;background:linear-gradient(90deg,#006bff 0px,#0a69ff 6px,#7858ff 47px,#eb45ff 82px,#ff41fd 88px,#ff29c3 107px,#ff138f 133px,#ff0060 170px,#ff005c 174px)}
.n74{margin-left:133px;width:169px;background:linear-gradient(90deg,#06f 0px,#0a64ff 6px,#7653ff 47px,#e740ff 82px,#ff3bfd 89px,#ff24c4 108px,#ff1090 134px,#ff0063 169px)}
.n75{margin-left:132px;width:163px;background:linear-gradient(90deg,#0062ff 0px,#0a5fff 6px,#774dff 48px,#ea3aff 84px,#ff36fe 90px,#ff20c5 109px,#ff0c8f 136px,#ff006c 163px)}
.n76{margin-left:131px;width:158px;background:linear-gradient(90deg,#005dff 0px,#0a5bff 6px,#7548ff 48px,#e734ff 84px,#ff30ff 91px,#ff1bc3 111px,#ff088f 138px,#ff0074 158px)}
.n77{margin-left:130px;width:152px;background:linear-gradient(90deg,#0059ff 0px,#0c56ff 7px,#7942ff 50px,#ed2eff 87px,#ff29fc 93px,#ff15c2 113px,#ff038d 141px,#ff007e 152px)}
.n78{margin-left:129px;width:147px;background:linear-gradient(90deg,#0054ff 0px,#0b51ff 7px,#773eff 50px,#e929ff 87px,#ff24fc 94px,#ff11c3 114px,#ff008e 142px,#ff0087 147px)}
.n79{margin-left:128px;width:141px;background:linear-gradient(90deg,#0050ff 0px,#0b4dff 7px,#7839ff 51px,#ed23ff 89px,#ff1ffd 95px,#ff0cc2 116px,#ff0093 141px)}
.n80{margin-left:127px;width:136px;background:linear-gradient(90deg,#004cff 0px,#0b49ff 7px,#7934ff 52px,#ec1eff 90px,#ff1afd 96px,#ff08c3 117px,#ff009d 136px)}
.n81{margin-left:126px;width:130px;background:linear-gradient(90deg,#0048ff 0px,#0b45ff 7px,#782fff 52px,#ec19ff 91px,#ff15fe 97px,#ff05c4 118px,#ff00ab 130px)}
.n82{margin-left:125px;width:125px;background:linear-gradient(90deg,#04f 0px,#0d40ff 8px,#7b2aff 54px,#ef13ff 93px,#ff0ffb 99px,#ff00c2 120px,#ff00b8 125px)}
.n83{margin-left:124px;width:119px;background:linear-gradient(90deg,#0040ff 0px,#0d3cff 8px,#7a26ff 54px,#eb0fff 93px,#ff0afc 100px,#ff00c8 119px)}
.n84{margin-left:123px;width:114px;background:linear-gradient(90deg,#003cff 0px,#0d39ff 8px,#7b22ff 55px,#ee0aff 95px,#ff06fc 101px,#ff00d7 114px)}
.n85{margin-left:122px;width:108px;background:linear-gradient(90deg,#0038ff 0px,#0f34ff 9px,#7c1dff 56px,#ee05ff 96px,#ff01fd 102px,#ff00eb 108px)}
.n86{margin-left:121px;width:103px;background:linear-gradient(90deg,#0035ff 0px,#0e31ff 9px,#7d19ff 57px,#f100ff 98px,#ff00fe 103px)}
.n87{margin-left:120px;width:97px;background:linear-gradient(90deg,#0031ff 0px,#0e2dff 9px,#7b15ff 57px,#ea00ff 97px)}
.n88{margin-left:119px;width:92px;background:linear-gradient(90deg,#002eff 0px,#0e2aff 9px,#7c11ff 58px,#d800ff 92px)}
.n89{margin-left:118px;width:86px;background:linear-gradient(90deg,#002aff 0px,#1026ff 10px,#7d0dff 59px,#c400ff 86px)}
.n90{margin-left:117px;width:81px;background:linear-gradient(90deg,#0027ff 0px,#1023ff 10px,#7e09ff 60px,#b400ff 81px)}
.n91{margin-left:116px;width:75px;background:linear-gradient(90deg,#0024ff 0px,#121fff 11px,#7e06ff 61px,#a100ff 75px)}
.n92{margin-left:115px;width:70px;background:linear-gradient(90deg,#0021ff 0px,#111cff 11px,#7f02ff 62px,#9300ff 70px)}
.n93{margin-left:114px;width:64px;background:linear-gradient(90deg,#001eff 0px,#1119ff 11px,#7e00ff 62px,#8200ff 64px)}
.n94{margin-left:113px;width:59px;background:linear-gradient(90deg,#001bff 0px,#1315ff 12px,#7500ff 59px)}
.n95{margin-left:112px;width:53px;background:linear-gradient(90deg,#0018ff 0px,#1312ff 12px,#60f 53px)}
.n96{margin-left:111px;width:48px;background:linear-gradient(90deg,#0015ff 0px,#140fff 13px,#5a00ff 48px)}
.n97{margin-left:110px;width:42px;background:linear-gradient(90deg,#0012ff 0px,#140cff 13px,#4d00ff 42px)}
.n98{margin-left:109px;width:37px;background:linear-gradient(90deg,#000fff 0px,#1609ff 14px,#4200ff 37px)}
.n99{margin-left:108px;width:31px;background:linear-gradient(90deg,#000cff 0px,#1706ff 15px,#3500ff 31px)}
.n100{margin-left:107px;width:26px;background:linear-gradient(90deg,#000aff 0px,#1703ff 15px,#2b00ff 26px)}
.n101{margin-left:106px;width:20px;background:linear-gradient(90deg,#0007ff 0px,#1900ff 16px,#2000ff 20px)}
.n102{margin-left:105px;width:15px;background:linear-gradient(90deg,#0005ff 0px,#1700ff 15px)}
.n103{margin-left:104px;width:9px;background:linear-gradient(90deg,#0002ff 0px,#0c00ff 9px)}
</style></head>
<body>
<div class="cie" style="left:0px"><div class="hs"><i class="o0"></i><i class="o1"></i><i class="o2"></i><i class="o3"></i><i class="o4"></i><i class="o5"></i><i class="o6"></i><i class="o7"></i><i class="o8"></i><i class="o9"></i><i class="o10"></i><i class="o11"></i><i class="o12"></i><i class="o13"></i><i class="o14"></i><i class="o15"></i><i class="o16"></i><i class="o17"></i><i class="o18"></i><i class="o19"></i><i class="o20"></i><i class="o21"></i><i class="o22"></i><i class="o23"></i><i class="o24"></i><i class="o25"></i><i class="o26"></i><i class="o27"></i><i class="o28"></i><i class="o29"></i><i class="o30"></i><i class="o31"></i><i class="o32"></i><i class="o33"></i><i class="o34"></i><i class="o35"></i><i class="o36"></i><i class="o37"></i><i class="o38"></i><i class="o39"></i><i class="o40"></i><i class="o41"></i><i class="o42"></i><i class="o43"></i><i class="o44"></i><i class="o45"></i><i class="o46"></i><i class="o47"></i><i class="o48"></i><i class="o49"></i><i class="o50"></i><i class="o51"></i><i class="o52"></i><i class="o53"></i><i class="o54"></i><i class="o55"></i><i class="o56"></i><i class="o57"></i><i class="o58"></i><i class="o59"></i><i class="o60"></i><i class="o61"></i><i class="o62"></i><i class="o63"></i><i class="o64"></i><i class="o65"></i><i class="o66"></i><i class="o67"></i><i class="o68"></i><i class="o69"></i><i class="o70"></i><i class="o71"></i><i class="o72"></i><i class="o73"></i><i class="o74"></i><i class="o75"></i><i class="o76"></i><i class="o77"></i><i class="o78"></i><i class="o79"></i><i class="o80"></i><i class="o81"></i><i class="o82"></i><i class="o83"></i><i class="o84"></i><i class="o85"></i><i class="o86"></i><i class="o87"></i><i class="o88"></i><i class="o89"></i><i class="o90"></i><i class="o91"></i><i class="o92"></i><i class="o93"></i><i class="o94"></i><i class="o95"></i><i class="o96"></i><i class="o97"></i><i class="o98"></i><i class="o99"></i><i class="o100"></i><i class="o101"></i><i class="o102"></i><i class="o103"></i><i class="o104"></i><i class="o105"></i><i class="o106"></i><i class="o107"></i><i class="o108"></i><i class="o109"></i><i class="o110"></i><i class="o111"></i><i class="o112"></i><i class="o113"></i><i class="o114"></i><i class="o115"></i><i class="o116"></i><i class="o117"></i><i class="o118"></i><i class="o119"></i><i class="o120"></i><i class="o121"></i><i class="o122"></i><i class="o123"></i><i class="o124"></i><i class="o125"></i><i class="o126"></i><i class="o127"></i><i class="o128"></i><i class="o129"></i><i class="o130"></i><i class="o131"></i><i class="o132"></i><i class="o133"></i><i class="o134"></i><i class="o135"></i><i class="o136"></i><i class="o137"></i><i class="o138"></i><i class="o139"></i><i class="o140"></i><i class="o141"></i><i class="o142"></i><i class="o143"></i><i class="o144"></i><i class="o145"></i><i class="o146"></i><i class="o147"></i><i class="o148"></i><i class="o149"></i><i class="o150"></i><i class="o151"></i><i class="o152"></i><i class="o153"></i><i class="o154"></i><i class="o155"></i><i class="o156"></i><i class="o157"></i><i></i></div><div class="tr"><i class="n0"></i><i class="n1"></i><i class="n2"></i><i class="n3"></i><i class="n4"></i><i class="n5"></i><i class="n6"></i><i class="n7"></i><i class="n8"></i><i class="n9"></i><i class="n10"></i><i class="n11"></i><i class="n12"></i><i class="n13"></i><i class="n14"></i><i class="n15"></i><i class="n16"></i><i class="n17"></i><i class="n18"></i><i class="n19"></i><i class="n20"></i><i class="n21"></i><i class="n22"></i><i class="n23"></i><i class="n24"></i><i class="n25"></i><i class="n26"></i><i class="n27"></i><i class="n28"></i><i class="n29"></i><i class="n30"></i><i class="n31"></i><i class="n32"></i><i class="n33"></i><i class="n34"></i><i class="n35"></i><i class="n36"></i><i class="n37"></i><i class="n38"></i><i class="n39"></i><i class="n40"></i><i class="n41"></i><i class="n42"></i><i class="n43"></i><i class="n44"></i><i class="n45"></i><i class="n46"></i><i class="n47"></i><i class="n48"></i><i class="n49"></i><i class="n50"></i><i class="n51"></i><i class="n52"></i><i class="n53"></i><i class="n54"></i><i class="n55"></i><i class="n56"></i><i class="n57"></i><i class="n58"></i><i class="n59"></i><i class="n60"></i><i class="n61"></i><i class="n62"></i><i class="n63"></i><i class="n64"></i><i class="n65"></i><i class="n66"></i><i class="n67"></i><i class="n68"></i><i class="n69"></i><i class="n70"></i><i class="n71"></i><i class="n72"></i><i class="n73"></i><i class="n74"></i><i class="n75"></i><i class="n76"></i><i class="n77"></i><i class="n78"></i><i class="n79"></i><i class="n80"></i><i class="n81"></i><i class="n82"></i><i class="n83"></i><i class="n84"></i><i class="n85"></i><i class="n86"></i><i class="n87"></i><i class="n88"></i><i class="n89"></i><i class="n90"></i><i class="n91"></i><i class="n92"></i><i class="n93"></i><i class="n94"></i><i class="n95"></i><i class="n96"></i><i class="n97"></i><i class="n98"></i><i class="n99"></i><i class="n100"></i><i class="n101"></i><i class="n102"></i><i class="n103"></i></div></div>
<div class="cie" style="left:500px"><div class="hs"><i class="o0"></i><i class="o1"></i><i class="o2"></i><i class="o3"></i><i class="o4"></i><i class="o5"></i><i class="o6"></i><i class="o7"></i><i class="o8"></i><i class="o9"></i><i class="o10"></i><i class="o11"></i><i class="o12"></i><i class="o13"></i><i class="o14"></i><i class="o15"></i><i class="o16"></i><i class="o17"></i><i class="o18"></i><i class="o19"></i><i class="o20"></i><i class="o21"></i><i class="o22"></i><i class="o23"></i><i class="o24"></i><i class="o25"></i><i class="o26"></i><i class="o27"></i><i class="o28"></i><i class="o29"></i><i class="o30"></i><i class="o31"></i><i class="o32"></i><i class="o33"></i><i class="o34"></i><i class="o35"></i><i class="o36"></i><i class="o37"></i><i class="o38"></i><i class="o39"></i><i class="o40"></i><i class="o41"></i><i class="o42"></i><i class="o43"></i><i class="o44"></i><i class="o45"></i><i class="o46"></i><i class="o47"></i><i class="o48"></i><i class="o49"></i><i class="o50"></i><i class="o51"></i><i class="o52"></i><i class="o53"></i><i class="o54"></i><i class="o55"></i><i class="o56"></i><i class="o57"></i><i class="o58"></i><i class="o59"></i><i class="o60"></i><i class="o61"></i><i class="o62"></i><i class="o63"></i><i class="o64"></i><i class="o65"></i><i class="o66"></i><i class="o67"></i><i class="o68"></i><i class="o69"></i><i class="o70"></i><i class="o71"></i><i class="o72"></i><i class="o73"></i><i class="o74"></i><i class="o75"></i><i class="o76"></i><i class="o77"></i><i class="o78"></i><i class="o79"></i><i class="o80"></i><i class="o81"></i><i class="o82"></i><i class="o83"></i><i class="o84"></i><i class="o85"></i><i class="o86"></i><i class="o87"></i><i class="o88"></i><i class="o89"></i><i class="o90"></i><i class="o91"></i><i class="o92"></i><i class="o93"></i><i class="o94"></i><i class="o95"></i><i class="o96"></i><i class="o97"></i><i class="o98"></i><i class="o99"></i><i class="o100"></i><i class="o101"></i><i class="o102"></i><i class="o103"></i><i class="o104"></i><i class="o105"></i><i class="o106"></i><i class="o107"></i><i class="o108"></i><i class="o109"></i><i class="o110"></i><i class="o111"></i><i class="o112"></i><i class="o113"></i><i class="o114"></i><i class="o115"></i><i class="o116"></i><i class="o117"></i><i class="o118"></i><i class="o119"></i><i class="o120"></i><i class="o121"></i><i class="o122"></i><i class="o123"></i><i class="o124"></i><i class="o125"></i><i class="o126"></i><i class="o127"></i><i class="o128"></i><i class="o129"></i><i class="o130"></i><i class="o131"></i><i class="o132"></i><i class="o133"></i><i class="o134"></i><i class="o135"></i><i class="o136"></i><i class="o137"></i><i class="o138"></i><i class="o139"></i><i class="o140"></i><i class="o141"></i><i class="o142"></i><i class="o143"></i><i class="o144"></i><i class="o145"></i><i class="o146"></i><i class="o147"></i><i class="o148"></i><i class="o149"></i><i class="o150"></i><i class="o151"></i><i class="o152"></i><i class="o153"></i><i class="o154"></i><i class="o155"></i><i class="o156"></i><i class="o157"></i><i></i></div><div class="tr"><i class="n0"></i><i class="n1"></i><i class="n2"></i><i class="n3"></i><i class="n4"></i><i class="n5"></i><i class="n6"></i><i class="n7"></i><i class="n8"></i><i class="n9"></i><i class="n10"></i><i class="n11"></i><i class="n12"></i><i class="n13"></i><i class="n14"></i><i class="n15"></i><i class="n16"></i><i class="n17"></i><i class="n18"></i><i class="n19"></i><i class="n20"></i><i class="n21"></i><i class="n22"></i><i class="n23"></i><i class="n24"></i><i class="n25"></i><i class="n26"></i><i class="n27"></i><i class="n28"></i><i class="n29"></i><i class="n30"></i><i class="n31"></i><i class="n32"></i><i class="n33"></i><i class="n34"></i><i class="n35"></i><i class="n36"></i><i class="n37"></i><i class="n38"></i><i class="n39"></i><i class="n40"></i><i class="n41"></i><i class="n42"></i><i class="n43"></i><i class="n44"></i><i class="n45"></i><i class="n46"></i><i class="n47"></i><i class="n48"></i><i class="n49"></i><i class="n50"></i><i class="n51"></i><i class="n52"></i><i class="n53"></i><i class="n54"></i><i class="n55"></i><i class="n56"></i><i class="n57"></i><i class="n58"></i><i class="n59"></i><i class="n60"></i><i class="n61"></i><i class="n62"></i><i class="n63"></i><i class="n64"></i><i class="n65"></i><i class="n66"></i><i class="n67"></i><i class="n68"></i><i class="n69"></i><i class="n70"></i><i class="n71"></i><i class="n72"></i><i class="n73"></i><i class="n74"></i><i class="n75"></i><i class="n76"></i><i class="n77"></i><i class="n78"></i><i class="n79"></i><i class="n80"></i><i class="n81"></i><i class="n82"></i><i class="n83"></i><i class="n84"></i><i class="n85"></i><i class="n86"></i><i class="n87"></i><i class="n88"></i><i class="n89"></i><i class="n90"></i><i class="n91"></i><i class="n92"></i><i class="n93"></i><i class="n94"></i><i class="n95"></i><i class="n96"></i><i class="n97"></i><i class="n98"></i><i class="n99"></i><i class="n100"></i><i class="n101"></i><i class="n102"></i><i class="n103"></i></div></div>
<svg id="ov" width="1000" height="625" viewBox="0 0 1000 625" font-family="Liberation Sans, sans-serif">
<defs>
<linearGradient id="gl" x1="0" y1="0" x2="0" y2="1"><stop offset="0" stop-color="#fff" stop-opacity=".28"/><stop offset=".12" stop-color="#fff" stop-opacity=".05"/><stop offset=".6" stop-color="#000" stop-opacity="0"/><stop offset="1" stop-color="#000" stop-opacity=".38"/></linearGradient>
<linearGradient id="gh" x1="0" y1="0" x2="1" y2="0"><stop offset="0" stop-color="#000" stop-opacity=".35"/><stop offset=".25" stop-color="#000" stop-opacity="0"/><stop offset=".75" stop-color="#000" stop-opacity="0"/><stop offset="1" stop-color="#000" stop-opacity=".35"/></linearGradient>
<linearGradient id="gb" x1="0" y1="0" x2="0" y2="1"><stop offset="0" stop-color="#727272"/><stop offset="1" stop-color="#555"/></linearGradient>
<linearGradient id="gd" x1="0" y1="0" x2="0" y2="1"><stop offset="0" stop-color="#5e5e5e"/><stop offset="1" stop-color="#4a4a4a"/></linearGradient>
<linearGradient id="gg" x1="0" y1="0" x2="0" y2="1"><stop offset="0" stop-color="#7be85e"/><stop offset=".15" stop-color="#52dc38"/><stop offset=".8" stop-color="#36cc22"/><stop offset="1" stop-color="#2aa81c"/></linearGradient>
<linearGradient id="gt" x1="0" y1="0" x2="0" y2="1"><stop offset="0" stop-color="#fff"/><stop offset=".55" stop-color="#f4f4f4"/><stop offset="1" stop-color="#b9c4b9"/></linearGradient>
<linearGradient id="gw" x1="0" y1="0" x2="0" y2="1"><stop offset="0" stop-color="#c9ccd2"/><stop offset=".45" stop-color="#9ea3ab"/><stop offset=".5" stop-color="#6d727b"/><stop offset="1" stop-color="#7f858e"/></linearGradient>
<linearGradient id="gx" x1="0" y1="0" x2="0" y2="1"><stop offset="0" stop-color="#eba695"/><stop offset=".45" stop-color="#d9745f"/><stop offset=".5" stop-color="#c83a1c"/><stop offset="1" stop-color="#d8502c"/></linearGradient>
<linearGradient id="gtl" x1="0" y1="0" x2="1" y2="0"><stop offset="0" stop-color="#c2c4c9"/><stop offset=".78" stop-color="#b6b9bf"/><stop offset=".92" stop-color="#7d838c"/><stop offset="1" stop-color="#1d2630" stop-opacity="0"/></linearGradient>
<linearGradient id="gtv" x1="0" y1="0" x2="0" y2="1"><stop offset="0" stop-color="#2a323c" stop-opacity=".55"/><stop offset=".35" stop-color="#2a323c" stop-opacity="0"/><stop offset="1" stop-color="#2a323c" stop-opacity=".12"/></linearGradient>
<linearGradient id="gtab" x1="0" y1="0" x2="0" y2="1"><stop offset="0" stop-color="#3e3e3e"/><stop offset="1" stop-color="#323232"/></linearGradient>
<radialGradient id="gc"><stop offset="0" stop-color="#6a6a6a"/><stop offset="1" stop-color="#3c3c3c"/></radialGradient>
<filter id="bl" x="-50%" y="-50%" width="200%" height="200%"><feGaussianBlur stdDeviation="4"/></filter>
<clipPath id="dc17"><rect x="17.5" y="519.8" width="470.2" height="86.3"/></clipPath>
<clipPath id="dc517"><rect x="517" y="519.8" width="470.5" height="86.3"/></clipPath>
<clipPath id="tb"><rect x="0" y="0" width="1000" height="13"/></clipPath>
</defs>
<rect x="0" y="0" width="1000" height="13" fill="#1c242e"/>
<g clip-path="url(#tb)">
<g filter="url(#bl)" opacity=".8"><ellipse cx="270" cy="15" rx="12" ry="10" fill="#a9c8ec"/><rect x="331" y="9" width="28" height="10" fill="#b4cdea"/><rect x="421" y="5" width="15" height="12" fill="#3f7cba"/><ellipse cx="187" cy="13" rx="7" ry="5" fill="#5fce7a"/><rect x="850" y="2" width="150" height="14" fill="#56606c" opacity=".7"/></g>
<rect x="0" y="0" width="200" height="13" fill="url(#gtl)"/><rect x="0" y="0" width="200" height="13" fill="url(#gtv)"/>
</g>
<rect x="0" y="1" width="11" height="12" fill="#050805"/>
<text x="1.6" y="11.6" font-size="12.5" textLength="7.4" lengthAdjust="spacingAndGlyphs" font-weight="bold" fill="#35e23a">5</text>
<text x="14.5" y="10.8" font-size="10.3" textLength="171.5" lengthAdjust="spacingAndGlyphs" fill="#1b1d26">CalMAN 5 CalMAN Enthusiast for Home Video</text>
<rect x="0" y="13" width="1000" height="1.2" fill="#70767e"/>
<rect x="926.5" y="-3" width="72" height="15.5" rx="3" fill="#3c434c" stroke="#aab0b8" stroke-opacity=".7" stroke-width="1"/>
<rect x="927.5" y="0" width="19" height="11.8" fill="url(#gw)"/><rect x="947.5" y="0" width="17" height="11.8" fill="url(#gw)"/><path d="M965.5 0h32.5v8.8a3 3 0 0 1-3 3h-29.5z" fill="url(#gx)"/>
<rect x="932.6" y="5.6" width="8.4" height="2.6" fill="#fff" stroke="#3a3f47" stroke-width=".6"/>
<path d="M954 2.6h4.6v4.6h-4.6z" fill="none" stroke="#e8e8e8" stroke-width="1.2"/><path d="M952.4 4.4h4.6v4.6h-4.6z" fill="#596068" stroke="#fff" stroke-width="1.3"/>
<text x="976.6" y="9.2" font-size="12.5" textLength="9.2" lengthAdjust="spacingAndGlyphs" font-weight="bold" fill="#fff" stroke="#7a3020" stroke-width=".5" paint-order="stroke">x</text>
<path d="M0 14.6H127V32.5a3.5 3.5 0 0 1-3.5 3.5H0z" fill="url(#gg)"/>
<rect x="0" y="35" width="124" height="1.2" fill="#1f7a14" opacity=".8"/>
<text x="4.9" y="32.3" font-size="20.6" textLength="79.4" lengthAdjust="spacingAndGlyphs" font-weight="bold" fill="#1d7a14" opacity=".55" stroke="#1d7a14" stroke-width=".8">CalMAN</text>
<text x="90.1" y="32.3" font-size="20.6" textLength="12.2" lengthAdjust="spacingAndGlyphs" font-weight="bold" fill="#1d7a14" opacity=".55" stroke="#1d7a14" stroke-width=".8">5</text>
<text x="4.2" y="31.5" font-size="20.6" textLength="79.4" lengthAdjust="spacingAndGlyphs" font-weight="bold" fill="url(#gt)" stroke="#eef2ee" stroke-width=".7">CalMAN</text>
<text x="89.4" y="31.5" font-size="20.6" textLength="12.2" lengthAdjust="spacingAndGlyphs" font-weight="bold" fill="url(#gt)" stroke="#eef2ee" stroke-width=".7">5</text>
<circle cx="115.5" cy="25.4" r="6" fill="#36b42a"/><circle cx="115.5" cy="25.4" r="6" fill="none" stroke="#5fe04c" stroke-opacity=".5"/>
<path d="M112.3 24.2h6.4l-3.2 3.6z" fill="#fff"/>
<path d="M0 39.6H15.5a3.5 3.5 0 0 1 3.5 3.5V55a3.5 3.5 0 0 1-3.5 3.5H0z" fill="url(#gb)" stroke="#a4a4a4" stroke-width="1"/>
<circle cx="8.6" cy="49" r="6.2" fill="#5e5e5e"/><path d="M6.9 45.6l4.2 3.4-4.2 3.4z" fill="#fff"/>
<path d="M20.5 61V43a3.5 3.5 0 0 1 3.5-3.5H114a3.5 3.5 0 0 1 3.5 3.5V61z" fill="url(#gtab)" stroke="#484848" stroke-width="1"/>
<rect x="94.3" y="40" width="1" height="20.5" fill="#2a2a2a"/>
<text x="24.7" y="54.2" font-size="9.3" textLength="65.4" lengthAdjust="spacingAndGlyphs" fill="#d8d8d8">5-Point Saturation</text>
<circle cx="105.2" cy="51.6" r="6.2" fill="#3c3c3c"/>
<text x="105.2" y="54.6" font-size="8.5" text-anchor="middle" fill="#8a8a8a">+</text>
<path d="M631.0 60.5V42.5a3 3 0 0 1 3-3H727.6a3 3 0 0 1 3 3V60.5z" fill="url(#gd)"/><path d="M631.0 60.5V42a2.5 2.5 0 0 1 2.5-2.5H634.4V60.5z" fill="#22d81e"/><circle cx="719.3" cy="50.3" r="6.3" fill="#444"/><circle cx="719.3" cy="50.3" r="6.3" fill="none" stroke="#6c6c6c" stroke-opacity=".6"/><path d="M716.0 49h6.6l-3.3 3.6z" fill="#fff"/><text x="637.6" y="48.1" font-size="8.8" textLength="73.4" lengthAdjust="spacingAndGlyphs" fill="#f2f2f2">X-Rite i1Display Retail</text><text x="637.6" y="57.7" font-size="8.8" textLength="48.4" lengthAdjust="spacingAndGlyphs" fill="#f2f2f2">40LE824E Dep</text>
<path d="M735.0 60.5V42.5a3 3 0 0 1 3-3H822.5a3 3 0 0 1 3 3V60.5z" fill="url(#gd)"/><path d="M735.0 60.5V42a2.5 2.5 0 0 1 2.5-2.5H738.4V60.5z" fill="#f0e400"/><circle cx="814.2" cy="50.3" r="6.3" fill="#444"/><circle cx="814.2" cy="50.3" r="6.3" fill="none" stroke="#6c6c6c" stroke-opacity=".6"/><path d="M810.9 49h6.6l-3.3 3.6z" fill="#fff"/><text x="741.6" y="48.1" font-size="8.8" textLength="22.6" lengthAdjust="spacingAndGlyphs" fill="#f2f2f2">Source</text>
<path d="M829.6 60.5V42.5a3 3 0 0 1 3-3H926.0a3 3 0 0 1 3 3V60.5z" fill="url(#gd)"/><path d="M829.6 60.5V42a2.5 2.5 0 0 1 2.5-2.5H833.0V60.5z" fill="#f0e400"/><circle cx="917.7" cy="50.3" r="6.3" fill="#444"/><circle cx="917.7" cy="50.3" r="6.3" fill="none" stroke="#6c6c6c" stroke-opacity=".6"/><path d="M914.4 49h6.6l-3.3 3.6z" fill="#fff"/><text x="836.2" y="48.1" font-size="8.8" textLength="73.0" lengthAdjust="spacingAndGlyphs" fill="#f2f2f2">Direct Display Control</text>
<rect x="931.2" y="39.5" width="23.2" height="19.8" rx="3" fill="url(#gb)" stroke="#8e8e8e" stroke-width="1"/>
<circle cx="942.8" cy="49.6" r="6.6" fill="#4a4a4a"/>
<rect x="956.2" y="39.5" width="23.2" height="19.8" rx="3" fill="url(#gb)" stroke="#8e8e8e" stroke-width="1"/>
<circle cx="967.8" cy="49.6" r="6.6" fill="#4a4a4a"/>
<rect x="981.2" y="39.5" width="23.2" height="19.8" rx="3" fill="url(#gb)" stroke="#8e8e8e" stroke-width="1"/>
<circle cx="992.8" cy="49.6" r="6.6" fill="#4a4a4a"/>
<circle cx="942.8" cy="49.6" r="3.0" fill="none" stroke="#c4c4c4" stroke-width="1.3"/>
<g stroke="#c4c4c4" stroke-width="1.4"><line x1="946.20" y1="49.60" x2="947.90" y2="49.60"/><line x1="945.20" y1="52.00" x2="946.41" y2="53.21"/><line x1="942.80" y1="53.00" x2="942.80" y2="54.70"/><line x1="940.40" y1="52.00" x2="939.19" y2="53.21"/><line x1="939.40" y1="49.60" x2="937.70" y2="49.60"/><line x1="940.40" y1="47.20" x2="939.19" y2="45.99"/><line x1="942.80" y1="46.20" x2="942.80" y2="44.50"/><line x1="945.20" y1="47.20" x2="946.41" y2="45.99"/></g>
<text x="967.8" y="53.8" font-size="11.5" text-anchor="middle" font-weight="bold" fill="#e2e2e2">?</text>
<path d="M993.2 46v7.2l-4.2-3.6z" fill="#f0f0f0"/>
<rect x="0" y="61" width="1000" height="19" fill="#303030"/>
<rect x="1.2" y="62" width="47.6" height="17" fill="url(#gb)"/>
<rect x="951" y="62" width="47.8" height="17" fill="url(#gb)"/>
<text x="15.6" y="74.3" font-size="10.8" textLength="19.6" lengthAdjust="spacingAndGlyphs" fill="#fff">Back</text>
<text x="965.0" y="74.3" font-size="10.8" textLength="19.4" lengthAdjust="spacingAndGlyphs" fill="#fff">Next</text>
<text x="190.0" y="75.2" font-size="12.2" textLength="120.0" lengthAdjust="spacingAndGlyphs" fill="#fff">Pre-Calibration Report</text>
<text x="687.0" y="75.2" font-size="12.2" textLength="125.6" lengthAdjust="spacingAndGlyphs" fill="#fff">Post-Calibration Report</text>
<rect x="0" y="397" width="1000" height="228" fill="#303030"/>
<rect x="2.0" y="80" width="1" height="317" fill="#a0a0a0"/>
<rect x="2.0" y="396" width="498.0" height="1" fill="#a0a0a0"/>
<rect x="502.0" y="80" width="1" height="317" fill="#a0a0a0"/>
<rect x="502.0" y="396" width="498.0" height="1" fill="#a0a0a0"/>
<rect x="212.7" y="263.8" width="9.4" height="10.6" fill="none" stroke="#000" stroke-opacity="1" stroke-width="1.15"/><rect x="258.2" y="263.8" width="9.4" height="10.6" fill="none" stroke="#fff" stroke-opacity=".78" stroke-width="1"/><rect x="305.5" y="263.8" width="9.4" height="10.6" fill="none" stroke="#fff" stroke-opacity=".78" stroke-width="1"/><rect x="347.1" y="263.8" width="9.4" height="10.6" fill="none" stroke="#fff" stroke-opacity=".78" stroke-width="1"/><rect x="390.9" y="263.8" width="9.4" height="10.6" fill="none" stroke="#fff" stroke-opacity=".78" stroke-width="1"/><rect x="438.1" y="263.8" width="9.4" height="10.6" fill="none" stroke="#fff" stroke-opacity=".78" stroke-width="1"/><rect x="211.1" y="242.2" width="9.4" height="10.6" fill="none" stroke="#fff" stroke-opacity=".78" stroke-width="1"/><rect x="210.0" y="221.9" width="9.4" height="10.6" fill="none" stroke="#fff" stroke-opacity=".78" stroke-width="1"/><rect x="207.8" y="201.9" width="9.4" height="10.6" fill="none" stroke="#fff" stroke-opacity=".78" stroke-width="1"/><rect x="206.3" y="181.7" width="9.4" height="10.6" fill="none" stroke="#fff" stroke-opacity=".78" stroke-width="1"/><rect x="204.7" y="159.8" width="9.4" height="10.6" fill="none" stroke="#fff" stroke-opacity=".78" stroke-width="1"/><rect x="189.6" y="285.9" width="9.4" height="10.6" fill="none" stroke="#fff" stroke-opacity=".78" stroke-width="1"/><rect x="168.3" y="306.4" width="9.4" height="10.6" fill="none" stroke="#fff" stroke-opacity=".78" stroke-width="1"/><rect x="146.2" y="326.2" width="9.4" height="10.6" fill="none" stroke="#fff" stroke-opacity=".78" stroke-width="1"/><rect x="123.8" y="346.7" width="9.4" height="10.6" fill="none" stroke="#fff" stroke-opacity=".78" stroke-width="1"/><rect x="100.9" y="368.9" width="9.4" height="10.6" fill="none" stroke="#fff" stroke-opacity=".78" stroke-width="1"/><rect x="200.9" y="263.8" width="9.4" height="10.6" fill="none" stroke="#fff" stroke-opacity=".78" stroke-width="1"/><rect x="188.9" y="263.8" width="9.4" height="10.6" fill="none" stroke="#fff" stroke-opacity=".78" stroke-width="1"/><rect x="175.9" y="263.8" width="9.4" height="10.6" fill="none" stroke="#fff" stroke-opacity=".78" stroke-width="1"/><rect x="164.4" y="263.8" width="9.4" height="10.6" fill="none" stroke="#fff" stroke-opacity=".78" stroke-width="1"/><rect x="152.1" y="263.8" width="9.4" height="10.6" fill="none" stroke="#fff" stroke-opacity=".78" stroke-width="1"/><rect x="214.9" y="278.6" width="9.4" height="10.6" fill="none" stroke="#fff" stroke-opacity=".78" stroke-width="1"/><rect x="215.3" y="292.3" width="9.4" height="10.6" fill="none" stroke="#fff" stroke-opacity=".78" stroke-width="1"/><rect x="216.2" y="304.6" width="9.4" height="10.6" fill="none" stroke="#fff" stroke-opacity=".78" stroke-width="1"/><rect x="217.5" y="316.0" width="9.4" height="10.6" fill="none" stroke="#fff" stroke-opacity=".78" stroke-width="1"/><rect x="218.5" y="331.8" width="9.4" height="10.6" fill="none" stroke="#fff" stroke-opacity=".78" stroke-width="1"/><rect x="228.4" y="249.9" width="9.4" height="10.6" fill="none" stroke="#fff" stroke-opacity=".78" stroke-width="1"/><rect x="244.1" y="234.4" width="9.4" height="10.6" fill="none" stroke="#fff" stroke-opacity=".78" stroke-width="1"/><rect x="258.2" y="222.3" width="9.4" height="10.6" fill="none" stroke="#fff" stroke-opacity=".78" stroke-width="1"/><rect x="271.6" y="210.5" width="9.4" height="10.6" fill="none" stroke="#fff" stroke-opacity=".78" stroke-width="1"/><rect x="286.8" y="196.2" width="9.4" height="10.6" fill="none" stroke="#fff" stroke-opacity=".78" stroke-width="1"/><ellipse cx="211.5" cy="254.9" rx="2.9" ry="3.5" fill="rgb(162,183,153)" stroke="#151a15" stroke-opacity=".8" stroke-width="1.05"/><ellipse cx="203.8" cy="236.8" rx="2.9" ry="3.5" fill="rgb(149,187,141)" stroke="#151a15" stroke-opacity=".8" stroke-width="1.05"/><ellipse cx="201.0" cy="201.8" rx="2.9" ry="3.5" fill="rgb(139,191,129)" stroke="#151a15" stroke-opacity=".8" stroke-width="1.05"/><ellipse cx="198.9" cy="160.0" rx="2.9" ry="3.5" fill="rgb(125,195,115)" stroke="#151a15" stroke-opacity=".8" stroke-width="1.05"/><ellipse cx="197.9" cy="145.6" rx="2.9" ry="3.5" fill="rgb(0,170,0)" stroke="#151a15" stroke-opacity=".8" stroke-width="1.05"/><ellipse cx="234.7" cy="252.0" rx="2.9" ry="3.5" fill="rgb(183,183,146)" stroke="#151a15" stroke-opacity=".8" stroke-width="1.05"/><ellipse cx="262.6" cy="226.9" rx="2.9" ry="3.5" fill="rgb(187,187,128)" stroke="#151a15" stroke-opacity=".8" stroke-width="1.05"/><ellipse cx="284.3" cy="209.1" rx="2.9" ry="3.5" fill="rgb(191,191,112)" stroke="#151a15" stroke-opacity=".8" stroke-width="1.05"/><ellipse cx="304.7" cy="196.8" rx="2.9" ry="3.5" fill="rgb(195,195,92)" stroke="#151a15" stroke-opacity=".8" stroke-width="1.05"/><ellipse cx="314.5" cy="198.9" rx="2.9" ry="3.5" fill="rgb(200,200,0)" stroke="#151a15" stroke-opacity=".8" stroke-width="1.05"/><ellipse cx="279.5" cy="256.8" rx="2.9" ry="3.5" fill="rgb(187,157,153)" stroke="#151a15" stroke-opacity=".8" stroke-width="1.05"/><ellipse cx="330.2" cy="257.9" rx="2.9" ry="3.5" fill="rgb(194,141,141)" stroke="#151a15" stroke-opacity=".8" stroke-width="1.05"/><ellipse cx="373.2" cy="257.0" rx="2.9" ry="3.5" fill="rgb(199,127,129)" stroke="#151a15" stroke-opacity=".8" stroke-width="1.05"/><ellipse cx="413.0" cy="257.9" rx="2.9" ry="3.5" fill="rgb(207,109,115)" stroke="#151a15" stroke-opacity=".8" stroke-width="1.05"/><ellipse cx="441.5" cy="263.8" rx="2.9" ry="3.5" fill="rgb(215,0,0)" stroke="#151a15" stroke-opacity=".8" stroke-width="1.05"/><ellipse cx="198.9" cy="277.1" rx="2.9" ry="3.5" fill="rgb(157,183,175)" stroke="#151a15" stroke-opacity=".8" stroke-width="1.05"/><ellipse cx="180.2" cy="286.9" rx="2.9" ry="3.5" fill="rgb(141,187,178)" stroke="#151a15" stroke-opacity=".8" stroke-width="1.05"/><ellipse cx="162.1" cy="291.4" rx="2.9" ry="3.5" fill="rgb(127,191,182)" stroke="#151a15" stroke-opacity=".8" stroke-width="1.05"/><ellipse cx="144.7" cy="297.3" rx="2.9" ry="3.5" fill="rgb(109,195,186)" stroke="#151a15" stroke-opacity=".8" stroke-width="1.05"/><ellipse cx="137.6" cy="298.9" rx="2.9" ry="3.5" fill="rgb(0,185,175)" stroke="#151a15" stroke-opacity=".8" stroke-width="1.05"/><ellipse cx="178.6" cy="304.8" rx="2.9" ry="3.5" fill="rgb(162,162,181)" stroke="#151a15" stroke-opacity=".8" stroke-width="1.05"/><ellipse cx="149.9" cy="333.6" rx="2.9" ry="3.5" fill="rgb(149,149,189)" stroke="#151a15" stroke-opacity=".8" stroke-width="1.05"/><ellipse cx="130.2" cy="352.3" rx="2.9" ry="3.5" fill="rgb(139,139,196)" stroke="#151a15" stroke-opacity=".8" stroke-width="1.05"/><ellipse cx="116.3" cy="366.9" rx="2.9" ry="3.5" fill="rgb(125,125,205)" stroke="#151a15" stroke-opacity=".8" stroke-width="1.05"/><ellipse cx="106.4" cy="377.1" rx="2.9" ry="3.5" fill="rgb(0,0,215)" stroke="#151a15" stroke-opacity=".8" stroke-width="1.05"/><ellipse cx="213.6" cy="284.8" rx="2.9" ry="3.5" fill="rgb(187,159,178)" stroke="#151a15" stroke-opacity=".8" stroke-width="1.05"/><ellipse cx="215.9" cy="297.9" rx="2.9" ry="3.5" fill="rgb(194,145,185)" stroke="#151a15" stroke-opacity=".8" stroke-width="1.05"/><ellipse cx="218.9" cy="310.2" rx="2.9" ry="3.5" fill="rgb(199,133,190)" stroke="#151a15" stroke-opacity=".8" stroke-width="1.05"/><ellipse cx="221.5" cy="320.2" rx="2.9" ry="3.5" fill="rgb(207,117,197)" stroke="#151a15" stroke-opacity=".8" stroke-width="1.05"/><ellipse cx="228.8" cy="335.7" rx="2.9" ry="3.5" fill="rgb(200,0,190)" stroke="#151a15" stroke-opacity=".8" stroke-width="1.05"/><ellipse cx="214.7" cy="272.0" rx="2.7" ry="3.3" fill="#fff" stroke="#222" stroke-width="1"/><ellipse cx="172.5" cy="303.6" rx="3.3" ry="3.8" fill="#000"/>
<rect x="712.7" y="263.8" width="9.4" height="10.6" fill="none" stroke="#000" stroke-opacity="1" stroke-width="1.15"/><rect x="758.2" y="263.8" width="9.4" height="10.6" fill="none" stroke="#fff" stroke-opacity=".78" stroke-width="1"/><rect x="805.5" y="263.8" width="9.4" height="10.6" fill="none" stroke="#fff" stroke-opacity=".78" stroke-width="1"/><rect x="847.1" y="263.8" width="9.4" height="10.6" fill="none" stroke="#fff" stroke-opacity=".78" stroke-width="1"/><rect x="890.9" y="263.8" width="9.4" height="10.6" fill="none" stroke="#fff" stroke-opacity=".78" stroke-width="1"/><rect x="938.1" y="263.8" width="9.4" height="10.6" fill="none" stroke="#fff" stroke-opacity=".78" stroke-width="1"/><rect x="711.1" y="242.2" width="9.4" height="10.6" fill="none" stroke="#fff" stroke-opacity=".78" stroke-width="1"/><rect x="710.0" y="221.9" width="9.4" height="10.6" fill="none" stroke="#fff" stroke-opacity=".78" stroke-width="1"/><rect x="707.8" y="201.9" width="9.4" height="10.6" fill="none" stroke="#fff" stroke-opacity=".78" stroke-width="1"/><rect x="706.3" y="181.7" width="9.4" height="10.6" fill="none" stroke="#fff" stroke-opacity=".78" stroke-width="1"/><rect x="704.7" y="159.8" width="9.4" height="10.6" fill="none" stroke="#fff" stroke-opacity=".78" stroke-width="1"/><rect x="689.6" y="285.9" width="9.4" height="10.6" fill="none" stroke="#fff" stroke-opacity=".78" stroke-width="1"/><rect x="668.3" y="306.4" width="9.4" height="10.6" fill="none" stroke="#fff" stroke-opacity=".78" stroke-width="1"/><rect x="646.2" y="326.2" width="9.4" height="10.6" fill="none" stroke="#fff" stroke-opacity=".78" stroke-width="1"/><rect x="623.8" y="346.7" width="9.4" height="10.6" fill="none" stroke="#fff" stroke-opacity=".78" stroke-width="1"/><rect x="600.9" y="368.9" width="9.4" height="10.6" fill="none" stroke="#fff" stroke-opacity=".78" stroke-width="1"/><rect x="700.9" y="263.8" width="9.4" height="10.6" fill="none" stroke="#fff" stroke-opacity=".78" stroke-width="1"/><rect x="688.9" y="263.8" width="9.4" height="10.6" fill="none" stroke="#fff" stroke-opacity=".78" stroke-width="1"/><rect x="675.9" y="263.8" width="9.4" height="10.6" fill="none" stroke="#fff" stroke-opacity=".78" stroke-width="1"/><rect x="664.4" y="263.8" width="9.4" height="10.6" fill="none" stroke="#fff" stroke-opacity=".78" stroke-width="1"/><rect x="652.1" y="263.8" width="9.4" height="10.6" fill="none" stroke="#fff" stroke-opacity=".78" stroke-width="1"/><rect x="714.9" y="278.6" width="9.4" height="10.6" fill="none" stroke="#fff" stroke-opacity=".78" stroke-width="1"/><rect x="715.3" y="292.3" width="9.4" height="10.6" fill="none" stroke="#fff" stroke-opacity=".78" stroke-width="1"/><rect x="716.2" y="304.6" width="9.4" height="10.6" fill="none" stroke="#fff" stroke-opacity=".78" stroke-width="1"/><rect x="717.5" y="316.0" width="9.4" height="10.6" fill="none" stroke="#fff" stroke-opacity=".78" stroke-width="1"/><rect x="718.5" y="331.8" width="9.4" height="10.6" fill="none" stroke="#fff" stroke-opacity=".78" stroke-width="1"/><rect x="728.4" y="249.9" width="9.4" height="10.6" fill="none" stroke="#fff" stroke-opacity=".78" stroke-width="1"/><rect x="744.1" y="234.4" width="9.4" height="10.6" fill="none" stroke="#fff" stroke-opacity=".78" stroke-width="1"/><rect x="758.2" y="222.3" width="9.4" height="10.6" fill="none" stroke="#fff" stroke-opacity=".78" stroke-width="1"/><rect x="771.6" y="210.5" width="9.4" height="10.6" fill="none" stroke="#fff" stroke-opacity=".78" stroke-width="1"/><rect x="786.8" y="196.2" width="9.4" height="10.6" fill="none" stroke="#fff" stroke-opacity=".78" stroke-width="1"/><ellipse cx="716.2" cy="250.1" rx="2.9" ry="3.5" fill="rgb(162,183,153)" stroke="#151a15" stroke-opacity=".8" stroke-width="1.05"/><ellipse cx="714.8" cy="229.3" rx="2.9" ry="3.5" fill="rgb(149,187,141)" stroke="#151a15" stroke-opacity=".8" stroke-width="1.05"/><ellipse cx="716.3" cy="207.2" rx="2.9" ry="3.5" fill="rgb(139,191,129)" stroke="#151a15" stroke-opacity=".8" stroke-width="1.05"/><ellipse cx="722.2" cy="186.4" rx="2.9" ry="3.5" fill="rgb(125,195,115)" stroke="#151a15" stroke-opacity=".8" stroke-width="1.05"/><ellipse cx="725.3" cy="168.5" rx="2.9" ry="3.5" fill="rgb(0,170,0)" stroke="#151a15" stroke-opacity=".8" stroke-width="1.05"/><ellipse cx="730.9" cy="256.8" rx="2.9" ry="3.5" fill="rgb(183,183,146)" stroke="#151a15" stroke-opacity=".8" stroke-width="1.05"/><ellipse cx="749.5" cy="237.7" rx="2.9" ry="3.5" fill="rgb(187,187,128)" stroke="#151a15" stroke-opacity=".8" stroke-width="1.05"/><ellipse cx="761.3" cy="228.0" rx="2.9" ry="3.5" fill="rgb(191,191,112)" stroke="#151a15" stroke-opacity=".8" stroke-width="1.05"/><ellipse cx="775.8" cy="215.5" rx="2.9" ry="3.5" fill="rgb(195,195,92)" stroke="#151a15" stroke-opacity=".8" stroke-width="1.05"/><ellipse cx="790.6" cy="202.1" rx="2.9" ry="3.5" fill="rgb(200,200,0)" stroke="#151a15" stroke-opacity=".8" stroke-width="1.05"/><ellipse cx="761.6" cy="268.8" rx="2.9" ry="3.5" fill="rgb(187,157,153)" stroke="#151a15" stroke-opacity=".8" stroke-width="1.05"/><ellipse cx="805.4" cy="270.1" rx="2.9" ry="3.5" fill="rgb(194,141,141)" stroke="#151a15" stroke-opacity=".8" stroke-width="1.05"/><ellipse cx="849.2" cy="269.0" rx="2.9" ry="3.5" fill="rgb(199,127,129)" stroke="#151a15" stroke-opacity=".8" stroke-width="1.05"/><ellipse cx="891.0" cy="270.1" rx="2.9" ry="3.5" fill="rgb(207,109,115)" stroke="#151a15" stroke-opacity=".8" stroke-width="1.05"/><ellipse cx="934.0" cy="266.9" rx="2.9" ry="3.5" fill="rgb(215,0,0)" stroke="#151a15" stroke-opacity=".8" stroke-width="1.05"/><ellipse cx="705.9" cy="268.8" rx="2.9" ry="3.5" fill="rgb(157,183,175)" stroke="#151a15" stroke-opacity=".8" stroke-width="1.05"/><ellipse cx="693.3" cy="269.9" rx="2.9" ry="3.5" fill="rgb(141,187,178)" stroke="#151a15" stroke-opacity=".8" stroke-width="1.05"/><ellipse cx="682.1" cy="268.0" rx="2.9" ry="3.5" fill="rgb(127,191,182)" stroke="#151a15" stroke-opacity=".8" stroke-width="1.05"/><ellipse cx="672.5" cy="270.9" rx="2.9" ry="3.5" fill="rgb(109,195,186)" stroke="#151a15" stroke-opacity=".8" stroke-width="1.05"/><ellipse cx="664.8" cy="271.7" rx="2.9" ry="3.5" fill="rgb(0,185,175)" stroke="#151a15" stroke-opacity=".8" stroke-width="1.05"/><ellipse cx="693.5" cy="290.5" rx="2.9" ry="3.5" fill="rgb(162,162,181)" stroke="#151a15" stroke-opacity=".8" stroke-width="1.05"/><ellipse cx="673.2" cy="311.2" rx="2.9" ry="3.5" fill="rgb(149,149,189)" stroke="#151a15" stroke-opacity=".8" stroke-width="1.05"/><ellipse cx="650.9" cy="330.9" rx="2.9" ry="3.5" fill="rgb(139,139,196)" stroke="#151a15" stroke-opacity=".8" stroke-width="1.05"/><ellipse cx="628.5" cy="351.7" rx="2.9" ry="3.5" fill="rgb(125,125,205)" stroke="#151a15" stroke-opacity=".8" stroke-width="1.05"/><ellipse cx="608.8" cy="371.7" rx="2.9" ry="3.5" fill="rgb(0,0,215)" stroke="#151a15" stroke-opacity=".8" stroke-width="1.05"/><ellipse cx="719.7" cy="282.3" rx="2.9" ry="3.5" fill="rgb(187,159,178)" stroke="#151a15" stroke-opacity=".8" stroke-width="1.05"/><ellipse cx="719.7" cy="297.3" rx="2.9" ry="3.5" fill="rgb(194,145,185)" stroke="#151a15" stroke-opacity=".8" stroke-width="1.05"/><ellipse cx="720.8" cy="309.5" rx="2.9" ry="3.5" fill="rgb(199,133,190)" stroke="#151a15" stroke-opacity=".8" stroke-width="1.05"/><ellipse cx="722.4" cy="321.0" rx="2.9" ry="3.5" fill="rgb(207,117,197)" stroke="#151a15" stroke-opacity=".8" stroke-width="1.05"/><ellipse cx="722.9" cy="336.8" rx="2.9" ry="3.5" fill="rgb(200,0,190)" stroke="#151a15" stroke-opacity=".8" stroke-width="1.05"/><ellipse cx="717.4" cy="269.1" rx="2.7" ry="3.3" fill="#fff" stroke="#222" stroke-width="1"/><ellipse cx="676.4" cy="300.8" rx="3.3" ry="3.8" fill="#000"/>
<rect x="188.8" y="376.2" width="309.8" height="17.5" fill="#303030"/>
<text x="194.8" y="390.2" font-size="12.2" textLength="297.6" lengthAdjust="spacingAndGlyphs" fill="#fff">Color Gamut Saturation CIE 1931 Chromaticity Diagram</text>
<rect x="688.8" y="376.2" width="309.8" height="17.5" fill="#303030"/>
<text x="694.8" y="390.2" font-size="12.2" textLength="297.6" lengthAdjust="spacingAndGlyphs" fill="#fff">Color Gamut Saturation CIE 1931 Chromaticity Diagram</text>
<rect x="20.2" y="406.8" width="467.5" height="99.6" fill="#242424" stroke="#9a9a9a" stroke-width="1"/><rect x="16.7" y="428.9" width="471.0" height="1.2" fill="#8c8c8c"/><rect x="16.7" y="457.0" width="471.0" height="1.2" fill="#8c8c8c"/><rect x="16.7" y="485.1" width="471.0" height="1.2" fill="#8c8c8c"/><rect x="160.5" y="444.0" width="7.5" height="14.4" fill="#000"/><rect x="161.5" y="444.8" width="5.5" height="12.8" fill="rgb(205,152,152)"/><rect x="161.5" y="444.8" width="5.5" height="12.8" fill="url(#gl)"/><rect x="167.8" y="456.8" width="7.5" height="8.9" fill="#000"/><rect x="168.8" y="457.6" width="5.5" height="7.3" fill="rgb(152,205,152)"/><rect x="168.8" y="457.6" width="5.5" height="7.3" fill="url(#gl)"/><rect x="175.1" y="444.0" width="7.5" height="14.4" fill="#000"/><rect x="176.1" y="444.8" width="5.5" height="12.8" fill="rgb(152,152,205)"/><rect x="176.1" y="444.8" width="5.5" height="12.8" fill="url(#gl)"/><rect x="182.6" y="456.7" width="7.3" height="1.6" fill="#000"/><rect x="189.8" y="442.0" width="7.5" height="16.4" fill="#000"/><rect x="190.8" y="442.8" width="5.5" height="14.8" fill="rgb(200,162,200)"/><rect x="190.8" y="442.8" width="5.5" height="14.8" fill="url(#gl)"/><rect x="197.1" y="449.4" width="7.5" height="9.0" fill="#000"/><rect x="198.1" y="450.2" width="5.5" height="7.4" fill="rgb(195,195,158)"/><rect x="198.1" y="450.2" width="5.5" height="7.4" fill="url(#gl)"/><rect x="227.3" y="441.1" width="7.5" height="17.3" fill="#000"/><rect x="228.3" y="441.9" width="5.5" height="15.7" fill="rgb(205,105,105)"/><rect x="228.3" y="441.9" width="5.5" height="15.7" fill="url(#gl)"/><rect x="234.6" y="456.8" width="7.5" height="21.0" fill="#000"/><rect x="235.6" y="457.6" width="5.5" height="19.4" fill="rgb(120,198,120)"/><rect x="235.6" y="457.6" width="5.5" height="19.4" fill="url(#gl)"/><rect x="241.9" y="443.2" width="7.5" height="15.2" fill="#000"/><rect x="242.9" y="444.0" width="5.5" height="13.6" fill="rgb(122,122,202)"/><rect x="242.9" y="444.0" width="5.5" height="13.6" fill="url(#gl)"/><rect x="249.2" y="456.8" width="7.5" height="11.8" fill="#000"/><rect x="250.2" y="457.6" width="5.5" height="10.2" fill="rgb(125,195,195)"/><rect x="250.2" y="457.6" width="5.5" height="10.2" fill="url(#gl)"/><rect x="256.6" y="438.8" width="7.5" height="19.6" fill="#000"/><rect x="257.6" y="439.6" width="5.5" height="18.0" fill="rgb(200,130,200)"/><rect x="257.6" y="439.6" width="5.5" height="18.0" fill="url(#gl)"/><rect x="263.9" y="451.7" width="7.5" height="6.7" fill="#000"/><rect x="264.9" y="452.5" width="5.5" height="5.1" fill="rgb(195,195,130)"/><rect x="264.9" y="452.5" width="5.5" height="5.1" fill="url(#gl)"/><rect x="294.1" y="437.1" width="7.5" height="21.3" fill="#000"/><rect x="295.1" y="437.9" width="5.5" height="19.7" fill="rgb(205,88,88)"/><rect x="295.1" y="437.9" width="5.5" height="19.7" fill="url(#gl)"/><rect x="301.4" y="456.8" width="7.5" height="28.6" fill="#000"/><rect x="302.4" y="457.6" width="5.5" height="27.0" fill="rgb(92,195,92)"/><rect x="302.4" y="457.6" width="5.5" height="27.0" fill="url(#gl)"/><rect x="308.7" y="439.9" width="7.5" height="18.5" fill="#000"/><rect x="309.7" y="440.7" width="5.5" height="16.9" fill="rgb(100,100,200)"/><rect x="309.7" y="440.7" width="5.5" height="16.9" fill="url(#gl)"/><rect x="316.0" y="456.8" width="7.5" height="20.1" fill="#000"/><rect x="317.0" y="457.6" width="5.5" height="18.5" fill="rgb(100,195,195)"/><rect x="317.0" y="457.6" width="5.5" height="18.5" fill="url(#gl)"/><rect x="323.4" y="437.1" width="7.5" height="21.3" fill="#000"/><rect x="324.4" y="437.9" width="5.5" height="19.7" fill="rgb(200,110,200)"/><rect x="324.4" y="437.9" width="5.5" height="19.7" fill="url(#gl)"/><rect x="330.7" y="453.3" width="7.5" height="5.1" fill="#000"/><rect x="331.7" y="454.1" width="5.5" height="3.5" fill="rgb(195,195,110)"/><rect x="331.7" y="454.1" width="5.5" height="3.5" fill="url(#gl)"/><rect x="360.9" y="433.9" width="7.5" height="24.5" fill="#000"/><rect x="361.9" y="434.7" width="5.5" height="22.9" fill="rgb(205,60,60)"/><rect x="361.9" y="434.7" width="5.5" height="22.9" fill="url(#gl)"/><rect x="368.2" y="456.8" width="7.5" height="31.9" fill="#000"/><rect x="369.2" y="457.6" width="5.5" height="30.3" fill="rgb(68,195,68)"/><rect x="369.2" y="457.6" width="5.5" height="30.3" fill="url(#gl)"/><rect x="375.5" y="435.3" width="7.5" height="23.1" fill="#000"/><rect x="376.5" y="436.1" width="5.5" height="21.5" fill="rgb(68,68,200)"/><rect x="376.5" y="436.1" width="5.5" height="21.5" fill="url(#gl)"/><rect x="382.8" y="456.8" width="7.5" height="27.6" fill="#000"/><rect x="383.8" y="457.6" width="5.5" height="26.0" fill="rgb(70,195,200)"/><rect x="383.8" y="457.6" width="5.5" height="26.0" fill="url(#gl)"/><rect x="390.1" y="434.4" width="7.5" height="24.0" fill="#000"/><rect x="391.1" y="435.2" width="5.5" height="22.4" fill="rgb(200,78,200)"/><rect x="391.1" y="435.2" width="5.5" height="22.4" fill="url(#gl)"/><rect x="397.6" y="456.7" width="7.3" height="1.6" fill="#000"/><rect x="427.6" y="431.2" width="7.5" height="27.2" fill="#000"/><rect x="428.6" y="432.0" width="5.5" height="25.6" fill="rgb(205,15,15)"/><rect x="428.6" y="432.0" width="5.5" height="25.6" fill="url(#gl)"/><rect x="435.0" y="456.8" width="7.5" height="35.9" fill="#000"/><rect x="436.0" y="457.6" width="5.5" height="34.3" fill="rgb(15,190,15)"/><rect x="436.0" y="457.6" width="5.5" height="34.3" fill="url(#gl)"/><rect x="442.3" y="407.9" width="7.5" height="50.5" fill="#000"/><rect x="443.3" y="408.7" width="5.5" height="48.9" fill="rgb(15,15,200)"/><rect x="443.3" y="408.7" width="5.5" height="48.9" fill="url(#gl)"/><rect x="449.6" y="456.8" width="7.5" height="29.7" fill="#000"/><rect x="450.6" y="457.6" width="5.5" height="28.1" fill="rgb(15,190,190)"/><rect x="450.6" y="457.6" width="5.5" height="28.1" fill="url(#gl)"/><rect x="456.9" y="439.3" width="7.5" height="19.1" fill="#000"/><rect x="457.9" y="440.1" width="5.5" height="17.5" fill="rgb(200,20,200)"/><rect x="457.9" y="440.1" width="5.5" height="17.5" fill="url(#gl)"/><rect x="464.3" y="456.8" width="7.5" height="4.3" fill="#000"/><rect x="465.3" y="457.6" width="5.5" height="2.7" fill="rgb(195,190,30)"/><rect x="465.3" y="457.6" width="5.5" height="2.7" fill="url(#gl)"/><rect x="69.6" y="456.7" width="7.4" height="1.8" fill="#1c1c1c"/><rect x="136.4" y="456.7" width="7.4" height="1.8" fill="#1c1c1c"/><text x="16.2" y="432.7" font-size="8.9" text-anchor="end" fill="#d0d0d0">50</text><text x="16.2" y="460.8" font-size="8.9" text-anchor="end" fill="#d0d0d0">0</text><text x="16.2" y="488.9" font-size="8.9" text-anchor="end" fill="#d0d0d0">-50</text>
<rect x="520.6" y="406.8" width="467.4" height="99.6" fill="#242424" stroke="#9a9a9a" stroke-width="1"/><rect x="517.1" y="428.9" width="470.9" height="1.2" fill="#8c8c8c"/><rect x="517.1" y="457.0" width="470.9" height="1.2" fill="#8c8c8c"/><rect x="517.1" y="485.1" width="470.9" height="1.2" fill="#8c8c8c"/><rect x="661.0" y="456.7" width="7.3" height="1.6" fill="#000"/><rect x="668.3" y="456.7" width="7.3" height="1.6" fill="#000"/><rect x="727.7" y="456.7" width="7.3" height="1.6" fill="#000"/><rect x="735.1" y="456.7" width="7.3" height="1.6" fill="#000"/><rect x="764.2" y="455.1" width="7.5" height="3.3" fill="#000"/><rect x="765.2" y="455.9" width="5.5" height="1.7" fill="rgb(195,195,130)"/><rect x="765.2" y="455.9" width="5.5" height="1.7" fill="url(#gl)"/><rect x="794.5" y="456.7" width="7.3" height="1.6" fill="#000"/><rect x="801.8" y="456.7" width="7.3" height="1.6" fill="#000"/><rect x="831.0" y="455.1" width="7.5" height="3.3" fill="#000"/><rect x="832.0" y="455.9" width="5.5" height="1.7" fill="rgb(195,195,110)"/><rect x="832.0" y="455.9" width="5.5" height="1.7" fill="url(#gl)"/><rect x="861.3" y="456.7" width="7.3" height="1.6" fill="#000"/><rect x="868.5" y="456.8" width="7.5" height="2.5" fill="#000"/><rect x="869.5" y="457.6" width="5.5" height="0.9" fill="rgb(68,195,68)"/><rect x="869.5" y="457.6" width="5.5" height="0.9" fill="url(#gl)"/><rect x="875.9" y="456.7" width="7.3" height="1.6" fill="#000"/><rect x="883.1" y="456.8" width="7.5" height="2.5" fill="#000"/><rect x="884.1" y="457.6" width="5.5" height="0.9" fill="rgb(70,195,200)"/><rect x="884.1" y="457.6" width="5.5" height="0.9" fill="url(#gl)"/><rect x="897.8" y="454.8" width="7.5" height="3.6" fill="#000"/><rect x="898.8" y="455.6" width="5.5" height="2.0" fill="rgb(195,195,82)"/><rect x="898.8" y="455.6" width="5.5" height="2.0" fill="url(#gl)"/><rect x="928.0" y="451.2" width="7.5" height="7.2" fill="#000"/><rect x="929.0" y="452.0" width="5.5" height="5.6" fill="rgb(205,15,15)"/><rect x="929.0" y="452.0" width="5.5" height="5.6" fill="url(#gl)"/><rect x="935.3" y="456.8" width="7.5" height="5.5" fill="#000"/><rect x="936.3" y="457.6" width="5.5" height="3.9" fill="rgb(15,190,15)"/><rect x="936.3" y="457.6" width="5.5" height="3.9" fill="url(#gl)"/><rect x="942.6" y="451.2" width="7.5" height="7.2" fill="#000"/><rect x="943.6" y="452.0" width="5.5" height="5.6" fill="rgb(15,15,200)"/><rect x="943.6" y="452.0" width="5.5" height="5.6" fill="url(#gl)"/><rect x="949.9" y="456.8" width="7.5" height="6.4" fill="#000"/><rect x="950.9" y="457.6" width="5.5" height="4.8" fill="rgb(15,190,190)"/><rect x="950.9" y="457.6" width="5.5" height="4.8" fill="url(#gl)"/><rect x="957.3" y="456.7" width="7.3" height="1.6" fill="#000"/><rect x="964.7" y="456.7" width="7.3" height="1.6" fill="#000"/><rect x="570.0" y="456.7" width="7.4" height="1.8" fill="#1c1c1c"/><rect x="636.8" y="456.7" width="7.4" height="1.8" fill="#1c1c1c"/><text x="516.6" y="432.7" font-size="8.9" text-anchor="end" fill="#d0d0d0">50</text><text x="516.6" y="460.8" font-size="8.9" text-anchor="end" fill="#d0d0d0">0</text><text x="516.6" y="488.9" font-size="8.9" text-anchor="end" fill="#d0d0d0">-50</text>
<rect x="17.5" y="519.8" width="470.2" height="86.3" fill="#242424"/><g clip-path="url(#dc17)"><rect x="158.2" y="545.2" width="7.5" height="61.7" fill="#000"/><rect x="159.2" y="546.0" width="5.5" height="60.1" fill="rgb(205,152,152)"/><rect x="159.2" y="546.0" width="5.5" height="60.1" fill="url(#gl)"/><rect x="165.6" y="575.6" width="7.5" height="31.3" fill="#000"/><rect x="166.6" y="576.4" width="5.5" height="29.7" fill="rgb(152,205,152)"/><rect x="166.6" y="576.4" width="5.5" height="29.7" fill="url(#gl)"/><rect x="173.0" y="551.8" width="7.5" height="55.1" fill="#000"/><rect x="174.0" y="552.6" width="5.5" height="53.5" fill="rgb(152,152,205)"/><rect x="174.0" y="552.6" width="5.5" height="53.5" fill="url(#gl)"/><rect x="180.3" y="554.7" width="7.5" height="52.2" fill="#000"/><rect x="181.3" y="555.5" width="5.5" height="50.6" fill="rgb(152,195,195)"/><rect x="181.3" y="555.5" width="5.5" height="50.6" fill="url(#gl)"/><rect x="187.7" y="571.9" width="7.5" height="35.0" fill="#000"/><rect x="188.7" y="572.7" width="5.5" height="33.4" fill="rgb(200,162,200)"/><rect x="188.7" y="572.7" width="5.5" height="33.4" fill="url(#gl)"/><rect x="195.1" y="580.8" width="7.5" height="26.1" fill="#000"/><rect x="196.1" y="581.6" width="5.5" height="24.5" fill="rgb(195,195,158)"/><rect x="196.1" y="581.6" width="5.5" height="24.5" fill="url(#gl)"/><rect x="225.4" y="547.2" width="7.5" height="59.7" fill="#000"/><rect x="226.4" y="548.0" width="5.5" height="58.1" fill="rgb(205,105,105)"/><rect x="226.4" y="548.0" width="5.5" height="58.1" fill="url(#gl)"/><rect x="232.8" y="542.6" width="7.5" height="64.3" fill="#000"/><rect x="233.8" y="543.4" width="5.5" height="62.7" fill="rgb(120,198,120)"/><rect x="233.8" y="543.4" width="5.5" height="62.7" fill="url(#gl)"/><rect x="240.1" y="524.8" width="7.5" height="82.1" fill="#000"/><rect x="241.1" y="525.6" width="5.5" height="80.5" fill="rgb(122,122,202)"/><rect x="241.1" y="525.6" width="5.5" height="80.5" fill="url(#gl)"/><rect x="247.5" y="524.8" width="7.5" height="82.1" fill="#000"/><rect x="248.5" y="525.6" width="5.5" height="80.5" fill="rgb(125,195,195)"/><rect x="248.5" y="525.6" width="5.5" height="80.5" fill="url(#gl)"/><rect x="254.9" y="568.1" width="7.5" height="38.8" fill="#000"/><rect x="255.9" y="568.9" width="5.5" height="37.2" fill="rgb(200,130,200)"/><rect x="255.9" y="568.9" width="5.5" height="37.2" fill="url(#gl)"/><rect x="262.2" y="570.2" width="7.5" height="36.7" fill="#000"/><rect x="263.2" y="571.0" width="5.5" height="35.1" fill="rgb(195,195,130)"/><rect x="263.2" y="571.0" width="5.5" height="35.1" fill="url(#gl)"/><rect x="292.6" y="541.4" width="7.5" height="65.5" fill="#000"/><rect x="293.6" y="542.2" width="5.5" height="63.9" fill="rgb(205,88,88)"/><rect x="293.6" y="542.2" width="5.5" height="63.9" fill="url(#gl)"/><rect x="299.9" y="513.2" width="7.5" height="93.7" fill="#000"/><rect x="300.9" y="514.0" width="5.5" height="92.1" fill="rgb(92,195,92)"/><rect x="300.9" y="514.0" width="5.5" height="92.1" fill="url(#gl)"/><rect x="307.3" y="530.5" width="7.5" height="76.4" fill="#000"/><rect x="308.3" y="531.3" width="5.5" height="74.8" fill="rgb(100,100,200)"/><rect x="308.3" y="531.3" width="5.5" height="74.8" fill="url(#gl)"/><rect x="314.7" y="513.2" width="7.5" height="93.7" fill="#000"/><rect x="315.7" y="514.0" width="5.5" height="92.1" fill="rgb(100,195,195)"/><rect x="315.7" y="514.0" width="5.5" height="92.1" fill="url(#gl)"/><rect x="322.0" y="566.2" width="7.5" height="40.7" fill="#000"/><rect x="323.0" y="567.0" width="5.5" height="39.1" fill="rgb(200,110,200)"/><rect x="323.0" y="567.0" width="5.5" height="39.1" fill="url(#gl)"/><rect x="329.4" y="563.9" width="7.5" height="43.0" fill="#000"/><rect x="330.4" y="564.7" width="5.5" height="41.4" fill="rgb(195,195,110)"/><rect x="330.4" y="564.7" width="5.5" height="41.4" fill="url(#gl)"/><rect x="359.8" y="534.2" width="7.5" height="72.7" fill="#000"/><rect x="360.8" y="535.0" width="5.5" height="71.1" fill="rgb(205,60,60)"/><rect x="360.8" y="535.0" width="5.5" height="71.1" fill="url(#gl)"/><rect x="367.1" y="513.2" width="7.5" height="93.7" fill="#000"/><rect x="368.1" y="514.0" width="5.5" height="92.1" fill="rgb(68,195,68)"/><rect x="368.1" y="514.0" width="5.5" height="92.1" fill="url(#gl)"/><rect x="374.5" y="540.9" width="7.5" height="66.0" fill="#000"/><rect x="375.5" y="541.7" width="5.5" height="64.4" fill="rgb(68,68,200)"/><rect x="375.5" y="541.7" width="5.5" height="64.4" fill="url(#gl)"/><rect x="381.9" y="513.2" width="7.5" height="93.7" fill="#000"/><rect x="382.9" y="514.0" width="5.5" height="92.1" fill="rgb(70,195,200)"/><rect x="382.9" y="514.0" width="5.5" height="92.1" fill="url(#gl)"/><rect x="389.2" y="561.6" width="7.5" height="45.3" fill="#000"/><rect x="390.2" y="562.4" width="5.5" height="43.7" fill="rgb(200,78,200)"/><rect x="390.2" y="562.4" width="5.5" height="43.7" fill="url(#gl)"/><rect x="396.6" y="557.0" width="7.5" height="49.9" fill="#000"/><rect x="397.6" y="557.8" width="5.5" height="48.3" fill="rgb(195,195,82)"/><rect x="397.6" y="557.8" width="5.5" height="48.3" fill="url(#gl)"/><rect x="426.9" y="559.6" width="7.5" height="47.3" fill="#000"/><rect x="427.9" y="560.4" width="5.5" height="45.7" fill="rgb(205,15,15)"/><rect x="427.9" y="560.4" width="5.5" height="45.7" fill="url(#gl)"/><rect x="434.3" y="513.2" width="7.5" height="93.7" fill="#000"/><rect x="435.3" y="514.0" width="5.5" height="92.1" fill="rgb(15,190,15)"/><rect x="435.3" y="514.0" width="5.5" height="92.1" fill="url(#gl)"/><rect x="441.7" y="543.7" width="7.5" height="63.2" fill="#000"/><rect x="442.7" y="544.5" width="5.5" height="61.6" fill="rgb(15,15,200)"/><rect x="442.7" y="544.5" width="5.5" height="61.6" fill="url(#gl)"/><rect x="449.0" y="513.2" width="7.5" height="93.7" fill="#000"/><rect x="450.0" y="514.0" width="5.5" height="92.1" fill="rgb(15,190,190)"/><rect x="450.0" y="514.0" width="5.5" height="92.1" fill="url(#gl)"/><rect x="456.4" y="570.8" width="7.5" height="36.1" fill="#000"/><rect x="457.4" y="571.6" width="5.5" height="34.5" fill="rgb(200,20,200)"/><rect x="457.4" y="571.6" width="5.5" height="34.5" fill="url(#gl)"/><rect x="463.8" y="568.1" width="7.5" height="38.8" fill="#000"/><rect x="464.8" y="568.9" width="5.5" height="37.2" fill="rgb(195,190,30)"/><rect x="464.8" y="568.9" width="5.5" height="37.2" fill="url(#gl)"/><rect x="135.3" y="583.2" width="7.6" height="23.7" fill="#000"/><rect x="136.3" y="584.0" width="5.6" height="22.1" fill="rgb(250,250,250)"/><rect x="136.3" y="584.0" width="5.6" height="22.1" fill="url(#gl)"/><rect x="67.6" y="601.6" width="7.6" height="4.5" fill="#000"/><rect x="68.6" y="602.6" width="5.6" height="2.5" fill="#1e1e1e"/></g><rect x="17.5" y="547.9" width="470.2" height="1.4" fill="#e01818"/><rect x="17.5" y="576.6" width="470.2" height="1.4" fill="#e8e020"/><rect x="17.5" y="588.2" width="470.2" height="1.2" fill="#0a740a"/><path d="M14.5 519.8H487.7V610.6" fill="none" stroke="#9a9a9a" stroke-width="1"/><path d="M17.5 519.8V610.6" fill="none" stroke="#9a9a9a" stroke-width="1"/><rect x="14.0" y="605.4" width="473.7" height="1.4" fill="#a8a8a8"/><rect x="84.2" y="606.1" width="1" height="4.5" fill="#a8a8a8"/><rect x="151.3" y="606.1" width="1" height="4.5" fill="#a8a8a8"/><rect x="218.5" y="606.1" width="1" height="4.5" fill="#a8a8a8"/><rect x="285.7" y="606.1" width="1" height="4.5" fill="#a8a8a8"/><rect x="352.9" y="606.1" width="1" height="4.5" fill="#a8a8a8"/><rect x="420.0" y="606.1" width="1" height="4.5" fill="#a8a8a8"/><rect x="14.0" y="576.8" width="3.5" height="1" fill="#a8a8a8"/><rect x="14.0" y="548.1" width="3.5" height="1" fill="#a8a8a8"/><text x="13.5" y="523.0" font-size="8.9" text-anchor="end" fill="#d0d0d0">15</text><text x="13.5" y="551.8" font-size="8.9" text-anchor="end" fill="#d0d0d0">10</text><text x="13.5" y="580.5" font-size="8.9" text-anchor="end" fill="#d0d0d0">5</text><text x="13.5" y="609.3" font-size="8.9" text-anchor="end" fill="#d0d0d0">0</text><text x="51.1" y="617.6" font-size="8.7" text-anchor="middle" fill="#c8c8c8">0</text><text x="118.3" y="617.6" font-size="8.7" text-anchor="middle" fill="#c8c8c8">100</text><text x="185.4" y="617.6" font-size="8.7" text-anchor="middle" fill="#c8c8c8">20%</text><text x="252.6" y="617.6" font-size="8.7" text-anchor="middle" fill="#c8c8c8">40%</text><text x="319.8" y="617.6" font-size="8.7" text-anchor="middle" fill="#c8c8c8">60%</text><text x="386.9" y="617.6" font-size="8.7" text-anchor="middle" fill="#c8c8c8">80%</text><text x="454.1" y="617.6" font-size="8.7" text-anchor="middle" fill="#c8c8c8">100%</text>
<rect x="517.0" y="519.8" width="470.5" height="86.3" fill="#242424"/><g clip-path="url(#dc517)"><rect x="658.4" y="604.5" width="6.3" height="1.4" fill="rgb(205,152,152)" fill-opacity=".6"/><rect x="665.2" y="599.5" width="7.5" height="7.4" fill="#000"/><rect x="666.2" y="600.3" width="5.5" height="5.8" fill="rgb(152,205,152)"/><rect x="666.2" y="600.3" width="5.5" height="5.8" fill="url(#gl)"/><rect x="673.2" y="604.5" width="6.3" height="1.4" fill="rgb(152,152,205)" fill-opacity=".6"/><rect x="680.5" y="604.5" width="6.3" height="1.4" fill="rgb(152,195,195)" fill-opacity=".6"/><rect x="687.3" y="603.6" width="7.5" height="3.3" fill="#000"/><rect x="688.3" y="604.4" width="5.5" height="1.7" fill="rgb(200,162,200)"/><rect x="688.3" y="604.4" width="5.5" height="1.7" fill="url(#gl)"/><rect x="694.7" y="602.1" width="7.5" height="4.8" fill="#000"/><rect x="695.7" y="602.9" width="5.5" height="3.2" fill="rgb(195,195,158)"/><rect x="695.7" y="602.9" width="5.5" height="3.2" fill="url(#gl)"/><rect x="725.0" y="602.1" width="7.5" height="4.8" fill="#000"/><rect x="726.0" y="602.9" width="5.5" height="3.2" fill="rgb(205,105,105)"/><rect x="726.0" y="602.9" width="5.5" height="3.2" fill="url(#gl)"/><rect x="732.4" y="602.1" width="7.5" height="4.8" fill="#000"/><rect x="733.4" y="602.9" width="5.5" height="3.2" fill="rgb(120,198,120)"/><rect x="733.4" y="602.9" width="5.5" height="3.2" fill="url(#gl)"/><rect x="739.8" y="604.1" width="7.5" height="2.8" fill="#000"/><rect x="740.8" y="604.9" width="5.5" height="1.2" fill="rgb(122,122,202)"/><rect x="740.8" y="604.9" width="5.5" height="1.2" fill="url(#gl)"/><rect x="747.2" y="601.8" width="7.5" height="5.1" fill="#000"/><rect x="748.2" y="602.6" width="5.5" height="3.5" fill="rgb(125,195,195)"/><rect x="748.2" y="602.6" width="5.5" height="3.5" fill="url(#gl)"/><rect x="755.1" y="604.5" width="6.3" height="1.4" fill="rgb(200,130,200)" fill-opacity=".6"/><rect x="761.9" y="597.0" width="7.5" height="9.9" fill="#000"/><rect x="762.9" y="597.8" width="5.5" height="8.3" fill="rgb(195,195,130)"/><rect x="762.9" y="597.8" width="5.5" height="8.3" fill="url(#gl)"/><rect x="792.3" y="602.1" width="7.5" height="4.8" fill="#000"/><rect x="793.3" y="602.9" width="5.5" height="3.2" fill="rgb(205,88,88)"/><rect x="793.3" y="602.9" width="5.5" height="3.2" fill="url(#gl)"/><rect x="799.6" y="599.8" width="7.5" height="7.1" fill="#000"/><rect x="800.6" y="600.6" width="5.5" height="5.5" fill="rgb(92,195,92)"/><rect x="800.6" y="600.6" width="5.5" height="5.5" fill="url(#gl)"/><rect x="807.6" y="604.5" width="6.3" height="1.4" fill="rgb(100,100,200)" fill-opacity=".6"/><rect x="814.4" y="602.1" width="7.5" height="4.8" fill="#000"/><rect x="815.4" y="602.9" width="5.5" height="3.2" fill="rgb(100,195,195)"/><rect x="815.4" y="602.9" width="5.5" height="3.2" fill="url(#gl)"/><rect x="822.3" y="604.5" width="6.3" height="1.4" fill="rgb(200,110,200)" fill-opacity=".6"/><rect x="829.1" y="600.7" width="7.5" height="6.2" fill="#000"/><rect x="830.1" y="601.5" width="5.5" height="4.6" fill="rgb(195,195,110)"/><rect x="830.1" y="601.5" width="5.5" height="4.6" fill="url(#gl)"/><rect x="859.5" y="599.0" width="7.5" height="7.9" fill="#000"/><rect x="860.5" y="599.8" width="5.5" height="6.3" fill="rgb(205,60,60)"/><rect x="860.5" y="599.8" width="5.5" height="6.3" fill="url(#gl)"/><rect x="866.8" y="590.3" width="7.5" height="16.6" fill="#000"/><rect x="867.8" y="591.1" width="5.5" height="15.0" fill="rgb(68,195,68)"/><rect x="867.8" y="591.1" width="5.5" height="15.0" fill="url(#gl)"/><rect x="874.8" y="604.5" width="6.3" height="1.4" fill="rgb(68,68,200)" fill-opacity=".6"/><rect x="881.6" y="594.1" width="7.5" height="12.8" fill="#000"/><rect x="882.6" y="594.9" width="5.5" height="11.2" fill="rgb(70,195,200)"/><rect x="882.6" y="594.9" width="5.5" height="11.2" fill="url(#gl)"/><rect x="889.6" y="604.5" width="6.3" height="1.4" fill="rgb(200,78,200)" fill-opacity=".6"/><rect x="896.3" y="602.4" width="7.5" height="4.5" fill="#000"/><rect x="897.3" y="603.2" width="5.5" height="2.9" fill="rgb(195,195,82)"/><rect x="897.3" y="603.2" width="5.5" height="2.9" fill="url(#gl)"/><rect x="926.7" y="597.0" width="7.5" height="9.9" fill="#000"/><rect x="927.7" y="597.8" width="5.5" height="8.3" fill="rgb(205,15,15)"/><rect x="927.7" y="597.8" width="5.5" height="8.3" fill="url(#gl)"/><rect x="934.1" y="584.9" width="7.5" height="22.0" fill="#000"/><rect x="935.1" y="585.7" width="5.5" height="20.4" fill="rgb(15,190,15)"/><rect x="935.1" y="585.7" width="5.5" height="20.4" fill="url(#gl)"/><rect x="941.4" y="600.9" width="7.5" height="6.0" fill="#000"/><rect x="942.4" y="601.7" width="5.5" height="4.4" fill="rgb(15,15,200)"/><rect x="942.4" y="601.7" width="5.5" height="4.4" fill="url(#gl)"/><rect x="948.8" y="581.1" width="7.5" height="25.8" fill="#000"/><rect x="949.8" y="581.9" width="5.5" height="24.2" fill="rgb(15,190,190)"/><rect x="949.8" y="581.9" width="5.5" height="24.2" fill="url(#gl)"/><rect x="956.2" y="603.7" width="7.5" height="3.2" fill="#000"/><rect x="957.2" y="604.5" width="5.5" height="1.6" fill="rgb(200,20,200)"/><rect x="957.2" y="604.5" width="5.5" height="1.6" fill="url(#gl)"/><rect x="963.5" y="603.7" width="7.5" height="3.2" fill="#000"/><rect x="964.5" y="604.5" width="5.5" height="1.6" fill="rgb(195,190,30)"/><rect x="964.5" y="604.5" width="5.5" height="1.6" fill="url(#gl)"/><rect x="634.8" y="602.1" width="7.6" height="4.8" fill="#000"/><rect x="635.8" y="602.9" width="5.6" height="3.2" fill="rgb(250,250,250)"/><rect x="635.8" y="602.9" width="5.6" height="3.2" fill="url(#gl)"/><rect x="567.1" y="601.6" width="7.6" height="4.5" fill="#000"/><rect x="568.1" y="602.6" width="5.6" height="2.5" fill="#1e1e1e"/></g><rect x="517.0" y="547.9" width="470.5" height="1.4" fill="#e01818"/><rect x="517.0" y="576.6" width="470.5" height="1.4" fill="#e8e020"/><rect x="517.0" y="588.2" width="470.5" height="1.2" fill="#0a740a"/><path d="M514.0 519.8H987.5V610.6" fill="none" stroke="#9a9a9a" stroke-width="1"/><path d="M517.0 519.8V610.6" fill="none" stroke="#9a9a9a" stroke-width="1"/><rect x="513.5" y="605.4" width="474.0" height="1.4" fill="#a8a8a8"/><rect x="583.7" y="606.1" width="1" height="4.5" fill="#a8a8a8"/><rect x="650.9" y="606.1" width="1" height="4.5" fill="#a8a8a8"/><rect x="718.1" y="606.1" width="1" height="4.5" fill="#a8a8a8"/><rect x="785.4" y="606.1" width="1" height="4.5" fill="#a8a8a8"/><rect x="852.6" y="606.1" width="1" height="4.5" fill="#a8a8a8"/><rect x="919.8" y="606.1" width="1" height="4.5" fill="#a8a8a8"/><rect x="513.5" y="576.8" width="3.5" height="1" fill="#a8a8a8"/><rect x="513.5" y="548.1" width="3.5" height="1" fill="#a8a8a8"/><text x="513.0" y="523.0" font-size="8.9" text-anchor="end" fill="#d0d0d0">15</text><text x="513.0" y="551.8" font-size="8.9" text-anchor="end" fill="#d0d0d0">10</text><text x="513.0" y="580.5" font-size="8.9" text-anchor="end" fill="#d0d0d0">5</text><text x="513.0" y="609.3" font-size="8.9" text-anchor="end" fill="#d0d0d0">0</text><text x="550.6" y="617.6" font-size="8.7" text-anchor="middle" fill="#c8c8c8">0</text><text x="617.8" y="617.6" font-size="8.7" text-anchor="middle" fill="#c8c8c8">100</text><text x="685.0" y="617.6" font-size="8.7" text-anchor="middle" fill="#c8c8c8">20%</text><text x="752.2" y="617.6" font-size="8.7" text-anchor="middle" fill="#c8c8c8">40%</text><text x="819.5" y="617.6" font-size="8.7" text-anchor="middle" fill="#c8c8c8">60%</text><text x="886.7" y="617.6" font-size="8.7" text-anchor="middle" fill="#c8c8c8">80%</text><text x="953.9" y="617.6" font-size="8.7" text-anchor="middle" fill="#c8c8c8">100%</text>
<rect x="168.8" y="408.5" width="163" height="18.6" fill="#303030"/>
<rect x="168.8" y="521.5" width="163" height="18" fill="#303030"/>
<text x="200.7" y="422.6" font-size="12.2" textLength="98.6" lengthAdjust="spacingAndGlyphs" fill="#fff">Gamut Luminance</text>
<rect x="668.8" y="408.5" width="163" height="18.6" fill="#303030"/>
<rect x="668.8" y="521.5" width="163" height="18" fill="#303030"/>
<text x="700.7" y="422.6" font-size="12.2" textLength="98.6" lengthAdjust="spacingAndGlyphs" fill="#fff">Gamut Luminance</text>
<text x="186.0" y="535.2" font-size="12.2" textLength="128.0" lengthAdjust="spacingAndGlyphs" fill="#fff">dE 2000 (Average: 10,4)</text>
<text x="694.5" y="535.2" font-size="12.2" textLength="110.5" lengthAdjust="spacingAndGlyphs" fill="#fff">dE 2000 (Average: 1)</text>
<rect x="0" y="623" width="1000" height="2" fill="#262626"/>
<rect x="12" y="623.4" width="10" height="1.6" fill="#8e8e8e"/>
<rect x="85" y="623.4" width="38" height="1.6" fill="#8e8e8e"/>
<rect x="172" y="623.4" width="35" height="1.6" fill="#8e8e8e"/>
<rect x="213" y="623.4" width="35" height="1.6" fill="#8e8e8e"/>
<rect x="559" y="623.4" width="39" height="1.6" fill="#8e8e8e"/>
</svg>
</body></html>
